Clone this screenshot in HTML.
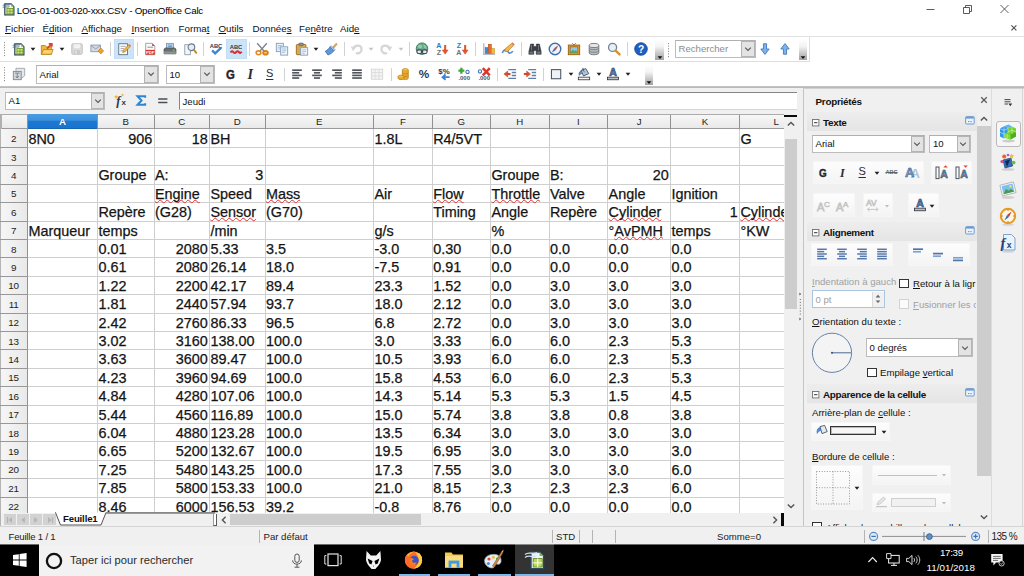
<!DOCTYPE html>
<html lang="fr"><head><meta charset="utf-8"><title>LOG-01-003-020-xxx.CSV - OpenOffice Calc</title>
<style>
html,body{margin:0;padding:0}
body{width:1024px;height:576px;overflow:hidden;position:relative;background:#f0f0f0;
 font-family:"Liberation Sans",sans-serif;font-size:9.6px;color:#000;line-height:1}
div,span,svg{position:absolute;box-sizing:border-box}
svg{overflow:visible}
.t{white-space:nowrap}
.u{text-decoration:underline}
.cell{font-size:14.4px;white-space:nowrap;color:#141414;line-height:18px;height:18px;-webkit-text-stroke:0.25px #141414}
.sp{text-decoration:underline wavy #e03030;text-decoration-thickness:1px;text-underline-offset:0px;text-decoration-skip-ink:none}
.hd{font-size:9.7px;color:#1c1c1c;text-align:center;line-height:14px;height:14px}
.rh{font-size:9.9px;color:#1c1c1c;letter-spacing:-0.3px;text-align:center;line-height:18px;height:18px;width:27px;left:0}
.vl{width:1px;background:#cfcfcf;top:0}
.hl{height:1px;background:#cfcfcf;left:0}
.combo{background:#fff;border:1px solid #bcbcbc;border-top-color:#b0b0b0}
.cbtn{background:#e3e3e3;border:1px solid #b4b4b4}
.sep{width:1px;background:#d2d2d2}
.grp{background:linear-gradient(#fdfdfd,#f4f4f4);border:1px solid #f6f6f6}
.ui{font-size:9.6px;white-space:nowrap;color:#111}
.b{font-weight:bold}
.dis{color:#a0a0a0}
</style></head>
<body>
<div class="" style="left:0px;top:0px;width:1024px;height:87px;background:#fff"></div><svg style="left:1.50px;top:2.20px" width="14" height="14" viewBox="0 0 16 16" ><path d="M3.2 2.2 L10.4 2.2 L13.6 5.4 V14.6 H3.2 Z" fill="#f1f5f8" stroke="#2b4558" stroke-width="1.4"/><path d="M10.4 2.2 L13.6 5.4 H10.4 Z" fill="#9cc24a"/><path d="M.8 4 C3.4 2 5.6 4.6 9 3 M.8 6.2 C3.4 4.4 5.4 6.6 8.4 5.4" stroke="#4f6b82" stroke-width="1" fill="none"/><rect x="5.6" y="7.4" width="7" height="6.2" fill="#d4e978" stroke="#6f9a2a" stroke-width="1"/><path d="M5.6 10.5 H12.6 M9.1 7.4 V13.6" stroke="#6f9a2a" stroke-width=".9"/></svg><span class="t ui" style="left:16.7px;top:5.6px;font-size:9.75px;color:#000;letter-spacing:-0.2px">LOG-01-003-020-xxx.CSV - OpenOffice Calc</span><svg style="left:920px;top:0" width="104" height="20" viewBox="0 0 104 20"><path d="M6.5 9.5 H14.5" stroke="#333" stroke-width=".8"/><path d="M43.5 7.5 H49.5 V13.5 H43.5 Z M45.5 7.5 V5.5 H51.5 V11.5 H49.5" fill="none" stroke="#333" stroke-width=".8"/><path d="M80.5 5 L88.5 13 M88.5 5 L80.5 13" stroke="#333" stroke-width=".8"/></svg><span class="t ui" style="left:5px;top:23.8px;font-size:9.75px"><span class="u" style="position:static">F</span>ichier</span><span class="t ui" style="left:42.5px;top:23.8px;font-size:9.75px">É<span class="u" style="position:static">d</span>ition</span><span class="t ui" style="left:81.5px;top:23.8px;font-size:9.75px"><span class="u" style="position:static">A</span>ffichage</span><span class="t ui" style="left:131.5px;top:23.8px;font-size:9.75px"><span class="u" style="position:static">I</span>nsertion</span><span class="t ui" style="left:178.5px;top:23.8px;font-size:9.75px">Forma<span class="u" style="position:static">t</span></span><span class="t ui" style="left:218.5px;top:23.8px;font-size:9.75px"><span class="u" style="position:static">O</span>utils</span><span class="t ui" style="left:252.5px;top:23.8px;font-size:9.75px">Donnée<span class="u" style="position:static">s</span></span><span class="t ui" style="left:299px;top:23.8px;font-size:9.75px">Fe<span class="u" style="position:static">n</span>être</span><span class="t ui" style="left:340px;top:23.8px;font-size:9.75px">Aid<span class="u" style="position:static">e</span></span><svg style="left:1009px;top:22.5px" width="10" height="10" viewBox="0 0 10 10"><path d="M2.4 2.4 L7.4 7.4 M7.4 2.4 L2.4 7.4" stroke="#555" stroke-width="1.2"/></svg><div class="" style="left:0px;top:36px;width:1024px;height:1px;background:#e2e2e2"></div><div class="" style="left:0px;top:61px;width:809px;height:1px;background:#dedede"></div><div class="" style="left:808.5px;top:37px;width:1px;height:25px;background:#dedede"></div><div class="" style="left:0px;top:86px;width:1024px;height:2px;background:linear-gradient(#c9c9c9,#b4b4b4)"></div><div class="" style="left:0px;top:88px;width:1024px;height:26px;background:#f0f0f0"></div><svg style="left:3.5px;top:42px" width="2" height="15" viewBox="0 0 2 15"><rect x="0" y="0.0" width="1" height="1.1" fill="#8a8a8a"/><rect x="0" y="2.6" width="1" height="1.1" fill="#8a8a8a"/><rect x="0" y="5.2" width="1" height="1.1" fill="#8a8a8a"/><rect x="0" y="7.8" width="1" height="1.1" fill="#8a8a8a"/><rect x="0" y="10.4" width="1" height="1.1" fill="#8a8a8a"/><rect x="0" y="13.0" width="1" height="1.1" fill="#8a8a8a"/></svg><svg style="left:11.60px;top:41.80px" width="14" height="14" viewBox="0 0 16 16" ><path d="M3.2 2.2 L10.4 2.2 L13.6 5.4 V14.6 H3.2 Z" fill="#f1f5f8" stroke="#2b4558" stroke-width="1.4"/><path d="M10.4 2.2 L13.6 5.4 H10.4 Z" fill="#9cc24a"/><path d="M.8 4 C3.4 2 5.6 4.6 9 3 M.8 6.2 C3.4 4.4 5.4 6.6 8.4 5.4" stroke="#4f6b82" stroke-width="1" fill="none"/><rect x="5.6" y="7.4" width="7" height="6.2" fill="#d4e978" stroke="#6f9a2a" stroke-width="1"/><path d="M5.6 10.5 H12.6 M9.1 7.4 V13.6" stroke="#6f9a2a" stroke-width=".9"/></svg><svg style="left:29px;top:45.099999999999994px" width="8" height="8" viewBox="-4 -4 8 8"><path d="M-2.4 -1.2 L2.4 -1.2 L0 1.7999999999999998 Z" fill="#222"/></svg><svg style="left:40.30px;top:41.80px" width="14" height="14" viewBox="0 0 16 16" ><path d="M1.5 4 H6 L7.3 5.6 H13 V14 H1.5 Z" fill="#f3b73e" stroke="#b57a14" stroke-width=".9"/><path d="M1.5 14 L4 8.6 H15 L13 14 Z" fill="#fbd36a" stroke="#b57a14" stroke-width=".9"/><path d="M8 7.5 L13.2 2.3 M13.5 5.5 V2 H10" stroke="#d8432a" stroke-width="2" fill="none"/></svg><svg style="left:58px;top:45.099999999999994px" width="8" height="8" viewBox="-4 -4 8 8"><path d="M-2.4 -1.2 L2.4 -1.2 L0 1.7999999999999998 Z" fill="#222"/></svg><svg style="left:69.50px;top:41.80px" width="14" height="14" viewBox="0 0 16 16" ><rect x="2" y="2" width="12" height="12" rx="1.5" fill="#dcdcdc" stroke="#bdbdbd"/><rect x="4.5" y="2.5" width="7" height="4.5" fill="#f2f2f2"/><rect x="4.5" y="9.5" width="7" height="4.5" fill="#c9c9c9"/><rect x="6" y="10.5" width="1.6" height="2.6" fill="#eee"/></svg><svg style="left:89.50px;top:41.80px" width="14" height="14" viewBox="0 0 16 16" ><rect x="1" y="3.5" width="11" height="7.6" fill="#d5dbe2" stroke="#8c97a5"/><path d="M1.3 4 L6.5 8 L11.7 4" fill="none" stroke="#8c97a5"/><path d="M9.2 10.2 L12.4 6.8 L15.6 10.2 L12.4 13.6 Z" fill="#f0a02c" stroke="#c27612" stroke-width=".7"/></svg><div class="sep" style="left:110px;top:42px;width:1px;height:13.5px;"></div><div class="" style="left:113.5px;top:38.5px;width:20px;height:20.5px;background:#cce4f7;border:1px solid #c2def5"></div><svg style="left:117.00px;top:41.80px" width="14" height="14" viewBox="0 0 16 16" ><rect x="2" y="2" width="10" height="12.5" fill="#fbfbfb" stroke="#5f6b7a"/><path d="M4 5 H10 M4 7.5 H8 M4 10 H7" stroke="#9aa6b4"/><path d="M6.5 12 L7.3 9.3 L13.3 3.2 L15.2 5.1 L9.2 11.2 Z" fill="#f3b64a" stroke="#a86f16" stroke-width=".7"/><path d="M13.3 3.2 L15.2 5.1 L15.9 4.3 L14.1 2.4 Z" fill="#e8607c"/></svg><div class="sep" style="left:136.5px;top:42px;width:1px;height:13.5px;"></div><svg style="left:143.00px;top:41.80px" width="14" height="14" viewBox="0 0 16 16" ><path d="M3 1.5 H10.5 L13.5 4.5 V14.5 H3 Z" fill="#fafafa" stroke="#9b9b9b"/><path d="M10.5 1.5 L13.5 4.5 H10.5 Z" fill="#d8402f"/><path d="M5 6 H11.5" stroke="#9fb4cc" stroke-width="1.6"/><rect x="3" y="9" width="10.5" height="5.5" fill="#d5342a"/><text x="8.2" y="13.6" font-family="Liberation Sans,sans-serif" font-size="4.8" font-weight="bold" text-anchor="middle" fill="#fff">PDF</text></svg><svg style="left:162.50px;top:41.80px" width="14" height="14" viewBox="0 0 16 16" ><rect x="4" y="1.5" width="8" height="6" fill="#c8daf0" stroke="#6b87a8" stroke-width=".8"/><path d="M5.5 3.5 H10.5 M5.5 5.2 H10.5" stroke="#5b84b8" stroke-width=".9"/><path d="M1.2 8 L3 6.8 H13 L14.8 8 V13.5 H1.2 Z" fill="#6a6e70" stroke="#3e4244" stroke-width=".8"/><rect x="1.2" y="10.8" width="13.6" height="2.7" fill="#8d9294"/><rect x="11.3" y="8.8" width="2" height="1" fill="#9fdc5a"/></svg><svg style="left:182.50px;top:41.80px" width="14" height="14" viewBox="0 0 16 16" ><path d="M2 3 H8.5 V14.5 H2 Z" fill="#f4f6f8" stroke="#8d98a6"/><circle cx="9.6" cy="6" r="3.8" fill="#dfeefa" stroke="#6e7a88" stroke-width="1.3"/><path d="M12.2 8.8 L15.2 12.4" stroke="#c58a2a" stroke-width="2.2" stroke-linecap="round"/></svg><div class="sep" style="left:202.5px;top:42px;width:1px;height:13.5px;"></div><svg style="left:208.50px;top:41.80px" width="14" height="14" viewBox="0 0 16 16" ><text x="8" y="6.6" font-family="Liberation Sans,sans-serif" font-size="6.6" font-weight="bold" text-anchor="middle" fill="#2b3a4e">ABC</text><path d="M3.6 9.6 L7 13 L14 6.4" fill="none" stroke="#3e84d6" stroke-width="2.6"/></svg><div class="" style="left:226px;top:38.5px;width:20.5px;height:20.5px;background:#cce4f7;border:1px solid #c2def5"></div><svg style="left:229.20px;top:41.80px" width="14" height="14" viewBox="0 0 16 16" ><text x="8" y="7.6" font-family="Liberation Sans,sans-serif" font-size="6.6" font-weight="bold" text-anchor="middle" fill="#2b3a4e">ABC</text><path d="M1.8 12 Q3.4 9.4 5 11.6 T8.2 11.6 T11.4 11.6 T14.4 11" fill="none" stroke="#d92f2f" stroke-width="2.3"/></svg><div class="sep" style="left:249px;top:42px;width:1px;height:13.5px;"></div><svg style="left:255.00px;top:41.80px" width="14" height="14" viewBox="0 0 16 16" ><path d="M2.5 1.5 L10.5 10.5 M13.5 1.5 L5.5 10.5" stroke="#7b8794" stroke-width="1.6"/><ellipse cx="4" cy="12.3" rx="2.7" ry="2.2" fill="none" stroke="#e28a1f" stroke-width="1.8"/><ellipse cx="12" cy="12.3" rx="2.7" ry="2.2" fill="#f4c27a" stroke="#d97e16" stroke-width="2"/></svg><svg style="left:275.00px;top:41.80px" width="14" height="14" viewBox="0 0 16 16" ><rect x="1.5" y="1.5" width="8" height="9.5" fill="#eaf1f8" stroke="#7f9cc0"/><path d="M3.2 4 H7.8 M3.2 6 H7.8 M3.2 8 H6" stroke="#8eb0d6" stroke-width=".8"/><rect x="6.5" y="5.5" width="8" height="9.5" fill="#eaf1f8" stroke="#7f9cc0"/><path d="M8.2 8 H12.8 M8.2 10 H12.8 M8.2 12 H11" stroke="#8eb0d6" stroke-width=".8"/></svg><svg style="left:294.50px;top:41.80px" width="14" height="14" viewBox="0 0 16 16" ><rect x="1.5" y="2.8" width="11" height="11.7" rx="1" fill="#d9a94f" stroke="#94681c"/><rect x="4.5" y="1.2" width="5" height="3" rx=".8" fill="#8b8f94" stroke="#5c6064" stroke-width=".7"/><rect x="6.5" y="6.5" width="8" height="8.5" fill="#f2f6fa" stroke="#7f9cc0"/><path d="M8.2 9 H12.8 M8.2 11 H12.8 M8.2 13 H11" stroke="#8eb0d6" stroke-width=".8"/></svg><svg style="left:312px;top:45.099999999999994px" width="8" height="8" viewBox="-4 -4 8 8"><path d="M-2.4 -1.2 L2.4 -1.2 L0 1.7999999999999998 Z" fill="#222"/></svg><svg style="left:324.00px;top:41.80px" width="14" height="14" viewBox="0 0 16 16" ><path d="M9.4 6.6 L13.8 1.4 L15 2.6 L10.6 7.8 Z" fill="#e9b75b" stroke="#9c6d1a" stroke-width=".6"/><path d="M1.5 10.5 C4 9.5 5.5 7.5 7 5.5 L11.5 10 C9.5 12 7.5 14 4.5 14.8 C3.5 13 2.2 12 1.5 10.5 Z" fill="#5d97dc" stroke="#2d5f9e" stroke-width=".8"/><path d="M7 5.5 L8.2 4.3 L12.6 8.7 L11.5 10 Z" fill="#c7d9ee" stroke="#2d5f9e" stroke-width=".6"/></svg><div class="sep" style="left:344px;top:42px;width:1px;height:13.5px;"></div><svg style="left:349.50px;top:41.80px" width="14" height="14" viewBox="0 0 16 16" ><g><path d="M4.2 7.2 C6 2.8 13.5 3.2 13.2 8.8 C13 12.4 9.4 13.6 6.6 12.6" fill="none" stroke="#d6d6d6" stroke-width="2.6"/><path d="M1 5 L7.2 5.6 L3.4 10.6 Z" fill="#d6d6d6"/></g></svg><svg style="left:367px;top:45.099999999999994px" width="8" height="8" viewBox="-4 -4 8 8"><path d="M-2.4 -1.2 L2.4 -1.2 L0 1.7999999999999998 Z" fill="#c4c4c4"/></svg><svg style="left:379.00px;top:41.80px" width="14" height="14" viewBox="0 0 16 16" ><g transform="translate(16 0) scale(-1 1)"><path d="M4.2 7.2 C6 2.8 13.5 3.2 13.2 8.8 C13 12.4 9.4 13.6 6.6 12.6" fill="none" stroke="#d6d6d6" stroke-width="2.6"/><path d="M1 5 L7.2 5.6 L3.4 10.6 Z" fill="#d6d6d6"/></g></svg><svg style="left:396.5px;top:45.099999999999994px" width="8" height="8" viewBox="-4 -4 8 8"><path d="M-2.4 -1.2 L2.4 -1.2 L0 1.7999999999999998 Z" fill="#c4c4c4"/></svg><div class="sep" style="left:408.5px;top:42px;width:1px;height:13.5px;"></div><svg style="left:414.50px;top:41.80px" width="14" height="14" viewBox="0 0 16 16" ><circle cx="8" cy="7.6" r="6.6" fill="#6aa88c" stroke="#3b6f58"/><path d="M3 5 C5 2 9 3 8 6 C7.4 8 4 7.6 3 5 Z M9.6 3 C12 3.4 13.6 5.6 13 8 C11 7 9.6 5.4 9.6 3 Z" fill="#8fd0a8"/><rect x="2.2" y="9" width="5.6" height="4.2" rx="2" fill="#e9edf0" stroke="#3f4a54" stroke-width="1.2"/><rect x="8.2" y="9" width="5.6" height="4.2" rx="2" fill="#e9edf0" stroke="#3f4a54" stroke-width="1.2"/><path d="M6.6 11.1 H9.4" stroke="#3f4a54" stroke-width="1.3"/></svg><svg style="left:434.50px;top:41.80px" width="14" height="14" viewBox="0 0 16 16" ><text x="4.4" y="7.2" font-family="Liberation Sans,sans-serif" font-size="8.2" font-weight="bold" text-anchor="middle" fill="#2d78cc">A</text><text x="4.4" y="14.8" font-family="Liberation Sans,sans-serif" font-size="8.2" font-weight="bold" text-anchor="middle" fill="#6a7480">Z</text><path d="M11.6 3.4 V10" stroke="#e2582e" stroke-width="2.4"/><path d="M8.2 9 H15 L11.6 14 Z" fill="#e2582e" stroke="#b8401c" stroke-width=".4"/></svg><svg style="left:454.50px;top:41.80px" width="14" height="14" viewBox="0 0 16 16" ><text x="4.4" y="7.2" font-family="Liberation Sans,sans-serif" font-size="8.2" font-weight="bold" text-anchor="middle" fill="#2d78cc">Z</text><text x="4.4" y="14.8" font-family="Liberation Sans,sans-serif" font-size="8.2" font-weight="bold" text-anchor="middle" fill="#6a7480">A</text><path d="M11.6 3.4 V10" stroke="#e2582e" stroke-width="2.4"/><path d="M8.2 9 H15 L11.6 14 Z" fill="#e2582e" stroke="#b8401c" stroke-width=".4"/></svg><div class="sep" style="left:474.5px;top:42px;width:1px;height:13.5px;"></div><svg style="left:481.50px;top:41.80px" width="14" height="14" viewBox="0 0 16 16" ><path d="M2 1.5 V14 H15" fill="none" stroke="#b4bcc6" stroke-width="1.6"/><rect x="3.6" y="6.5" width="3.4" height="6.5" fill="#3f8fd0" stroke="#2a64a0" stroke-width=".6"/><rect x="7.2" y="2.6" width="3.4" height="10.4" fill="#ec6a2c" stroke="#b04410" stroke-width=".6"/><rect x="10.8" y="7.6" width="3.4" height="5.4" fill="#f4bc3a" stroke="#b88410" stroke-width=".6"/></svg><svg style="left:501.00px;top:41.80px" width="14" height="14" viewBox="0 0 16 16" ><path d="M1.5 12.5 C3 8 7 8 8 11 C9 13.6 12 13 13.5 10.5" fill="none" stroke="#4f8fd8" stroke-width="1.8"/><path d="M4 10.6 L5 7.6 L12.2 1.4 L14.6 3.8 L7.4 11 Z" fill="#f3b64a" stroke="#a86f16" stroke-width=".7"/><path d="M12.2 1.4 L14.6 3.8 L15.6 2.8 L13.2 .4 Z" fill="#e8607c"/></svg><div class="sep" style="left:521px;top:42px;width:1px;height:13.5px;"></div><svg style="left:528.00px;top:41.80px" width="14" height="14" viewBox="0 0 16 16" ><path d="M3 2.4 H6.4 V5 H9.6 V2.4 H13 L15 11 V14 H9.4 V9.6 H6.6 V14 H1 V11 Z" fill="#3a3f45" stroke="#1f2328" stroke-width=".6"/><rect x="1.6" y="11" width="4.4" height="2.4" fill="#6d747c"/><rect x="10" y="11" width="4.4" height="2.4" fill="#6d747c"/><path d="M4 3.2 V9.6 M12 3.2 V9.6" stroke="#7d858e" stroke-width=".9"/></svg><svg style="left:547.50px;top:41.80px" width="14" height="14" viewBox="0 0 16 16" ><circle cx="8" cy="8" r="6.6" fill="#eef3f9" stroke="#3f6fb4" stroke-width="1.6"/><path d="M11.8 3.8 L9 9 L7 7 Z" fill="#d8392c"/><path d="M4.2 12.2 L7 7 L9 9 Z" fill="#3f6fb4"/></svg><svg style="left:567.00px;top:41.80px" width="14" height="14" viewBox="0 0 16 16" ><path d="M6 1.4 L8 3.4 L10 1.4" fill="none" stroke="#6b5a3a" stroke-width=".9"/><rect x="1.5" y="3.5" width="13" height="11" fill="#e89a2c" stroke="#9a5c0c"/><rect x="3.6" y="5.6" width="8.8" height="6.8" fill="#8fc7ea" stroke="#7c4a08" stroke-width=".6"/><path d="M3.8 12.2 L6.6 8.6 L8.6 10.6 L10.2 9.2 L12.2 12.2 Z" fill="#5aa84a"/></svg><svg style="left:586.50px;top:41.80px" width="14" height="14" viewBox="0 0 16 16" ><path d="M2.5 4 V12.5 C2.5 15.2 13.5 15.2 13.5 12.5 V4" fill="#b9bdc2" stroke="#6c7278"/><ellipse cx="8" cy="4" rx="5.5" ry="2.4" fill="#e4e6e9" stroke="#6c7278"/><path d="M2.5 6.9 C2.5 9.5 13.5 9.5 13.5 6.9 M2.5 9.8 C2.5 12.4 13.5 12.4 13.5 9.8" fill="none" stroke="#6c7278" stroke-width=".9"/></svg><svg style="left:606.50px;top:41.80px" width="14" height="14" viewBox="0 0 16 16" ><circle cx="6.4" cy="6.2" r="4.6" fill="#e3f0fb" stroke="#76828f" stroke-width="1.5"/><path d="M9.8 9.8 L14.4 14.2" stroke="#d8912a" stroke-width="2.6" stroke-linecap="round"/></svg><div class="sep" style="left:626.5px;top:42px;width:1px;height:13.5px;"></div><svg style="left:633.50px;top:41.80px" width="14" height="14" viewBox="0 0 16 16" ><circle cx="8" cy="8" r="7.2" fill="#1f5fc4" stroke="#123f8c" stroke-width=".9"/><text x="8" y="12.2" font-family="Liberation Sans,sans-serif" font-size="11.5" font-weight="bold" text-anchor="middle" fill="#fff">?</text></svg><div style="left:655px;top:39px;width:8.5px;height:20.5px;background:linear-gradient(#ffffff 0%,#f4f4f4 35%,#b9b9b9 80%,#a2a2a2 100%)"></div><svg style="left:655.7px;top:51.5px" width="8" height="8" viewBox="-4 -4 8 8"><path d="M-2.4 .2 L2.4 .2 L0 2.9 Z" fill="#111"/></svg><svg style="left:668px;top:42.5px" width="2" height="15" viewBox="0 0 2 15"><rect x="0" y="0.0" width="1" height="1.1" fill="#8a8a8a"/><rect x="0" y="2.6" width="1" height="1.1" fill="#8a8a8a"/><rect x="0" y="5.2" width="1" height="1.1" fill="#8a8a8a"/><rect x="0" y="7.8" width="1" height="1.1" fill="#8a8a8a"/><rect x="0" y="10.4" width="1" height="1.1" fill="#8a8a8a"/><rect x="0" y="13.0" width="1" height="1.1" fill="#8a8a8a"/></svg><div class="combo" style="left:675px;top:39.5px;width:80.5px;height:18.5px;"></div><span class="t ui" style="left:678.5px;top:44.2px;color:#8c8c8c;font-size:9.6px">Rechercher</span><div class="cbtn" style="left:740.5px;top:40.5px;width:14px;height:16.5px;"></div><svg style="left:741.5px;top:42.8px" width="12" height="12" viewBox="-6 -6 12 12"><path d="M-2.8 -1.4 L0 1.4 L2.8 -1.4" fill="none" stroke="#555" stroke-width="1.1"/></svg><svg style="left:757.50px;top:41.80px" width="14" height="14" viewBox="0 0 16 16" ><g><path d="M6.2 2 H9.8 V8 H12.8 L8 14.2 L3.2 8 H6.2 Z" fill="#7fb2ea" stroke="#3f78c0" stroke-width="1"/></g></svg><svg style="left:777.50px;top:41.80px" width="14" height="14" viewBox="0 0 16 16" ><g transform="translate(0 16) scale(1 -1)"><path d="M6.2 2 H9.8 V8 H12.8 L8 14.2 L3.2 8 H6.2 Z" fill="#7fb2ea" stroke="#3f78c0" stroke-width="1"/></g></svg><div style="left:798.5px;top:39px;width:8.5px;height:20.5px;background:linear-gradient(#ffffff 0%,#f4f4f4 35%,#b9b9b9 80%,#a2a2a2 100%)"></div><svg style="left:799.2px;top:51.5px" width="8" height="8" viewBox="-4 -4 8 8"><path d="M-2.4 .2 L2.4 .2 L0 2.9 Z" fill="#111"/></svg><svg style="left:3.5px;top:67px" width="2" height="15" viewBox="0 0 2 15"><rect x="0" y="0.0" width="1" height="1.1" fill="#8a8a8a"/><rect x="0" y="2.6" width="1" height="1.1" fill="#8a8a8a"/><rect x="0" y="5.2" width="1" height="1.1" fill="#8a8a8a"/><rect x="0" y="7.8" width="1" height="1.1" fill="#8a8a8a"/><rect x="0" y="10.4" width="1" height="1.1" fill="#8a8a8a"/><rect x="0" y="13.0" width="1" height="1.1" fill="#8a8a8a"/></svg><svg style="left:11.50px;top:67.00px" width="14" height="14" viewBox="0 0 16 16" ><path d="M4.5 1.5 H14.5 V10 L11.5 12.5 H4.5 Z" fill="#e6e9ec" stroke="#9ba3ab"/><rect x="1.5" y="5" width="9" height="9.5" fill="#d2d7dc" stroke="#7c858e"/><path d="M3.5 7 H8.5 M6 7 V12.6 M4.2 10.4 L6 12.6 L7.8 10.4" fill="none" stroke="#6b737b" stroke-width=".9"/></svg><div class="combo" style="left:36px;top:65px;width:122.5px;height:18.5px;"></div><span class="t ui" style="left:39.5px;top:69.6px;font-size:9.6px">Arial</span><div class="cbtn" style="left:144px;top:66px;width:13.5px;height:16.5px;"></div><svg style="left:144.7px;top:68.2px" width="12" height="12" viewBox="-6 -6 12 12"><path d="M-2.8 -1.4 L0 1.4 L2.8 -1.4" fill="none" stroke="#555" stroke-width="1.1"/></svg><div class="combo" style="left:166px;top:65px;width:48.5px;height:18.5px;"></div><span class="t ui" style="left:169.5px;top:69.6px;font-size:9.6px">10</span><div class="cbtn" style="left:200px;top:66px;width:13.5px;height:16.5px;"></div><svg style="left:200.7px;top:68.2px" width="12" height="12" viewBox="-6 -6 12 12"><path d="M-2.8 -1.4 L0 1.4 L2.8 -1.4" fill="none" stroke="#555" stroke-width="1.1"/></svg><span class="t ui b" style="left:226.4px;top:68.3px;font-size:13.2px;color:#23262b;transform:scaleX(.86);transform-origin:0 0;-webkit-text-stroke:.45px #23262b">G</span><span class="t ui b" style="left:247.6px;top:67.2px;font-size:14.2px;font-style:italic;font-family:'Liberation Serif',serif;color:#2a2d33">I</span><span class="t ui u" style="left:266px;top:67.8px;font-size:11px;color:#2a2d33;text-underline-offset:1.5px">S</span><div class="sep" style="left:284px;top:67.5px;width:1px;height:13.5px;"></div><svg style="left:290.00px;top:67.20px" width="14" height="14" viewBox="0 0 16 16" ><path d="M2.5 3.6 H13.5" stroke="#50555b" stroke-width="1.9"/><path d="M2.5 6.6 H10.5" stroke="#50555b" stroke-width="1.9"/><path d="M2.5 9.6 H13.5" stroke="#50555b" stroke-width="1.9"/><path d="M2.5 12.6 H10.5" stroke="#50555b" stroke-width="1.9"/></svg><svg style="left:310.00px;top:67.20px" width="14" height="14" viewBox="0 0 16 16" ><path d="M2.5 3.6 H13.5" stroke="#50555b" stroke-width="1.9"/><path d="M4.5 6.6 H11.5" stroke="#50555b" stroke-width="1.9"/><path d="M2.5 9.6 H13.5" stroke="#50555b" stroke-width="1.9"/><path d="M4.5 12.6 H11.5" stroke="#50555b" stroke-width="1.9"/></svg><svg style="left:330.00px;top:67.20px" width="14" height="14" viewBox="0 0 16 16" ><path d="M2.5 3.6 H13.5" stroke="#50555b" stroke-width="1.9"/><path d="M5.5 6.6 H13.5" stroke="#50555b" stroke-width="1.9"/><path d="M2.5 9.6 H13.5" stroke="#50555b" stroke-width="1.9"/><path d="M5.5 12.6 H13.5" stroke="#50555b" stroke-width="1.9"/></svg><svg style="left:350.00px;top:67.20px" width="14" height="14" viewBox="0 0 16 16" ><path d="M2.5 3.6 H13.5" stroke="#50555b" stroke-width="1.9"/><path d="M2.5 6.6 H13.5" stroke="#50555b" stroke-width="1.9"/><path d="M2.5 9.6 H13.5" stroke="#50555b" stroke-width="1.9"/><path d="M2.5 12.6 H13.5" stroke="#50555b" stroke-width="1.9"/></svg><svg style="left:370.00px;top:67.20px" width="14" height="14" viewBox="0 0 16 16" ><rect x="1.5" y="2.5" width="13" height="11.5" fill="#f4f4f4" stroke="#d4d4d4"/><path d="M1.5 6.3 H14.5 M1.5 10.2 H14.5 M5.8 2.5 V14 M10.2 2.5 V14" stroke="#d9d9d9" stroke-width=".9"/></svg><div class="sep" style="left:390.5px;top:67.5px;width:1px;height:13.5px;"></div><svg style="left:396.50px;top:67.00px" width="14" height="14" viewBox="0 0 16 16" ><ellipse cx="9.5" cy="3.6" rx="3.4" ry="1.8" fill="#f6c84a" stroke="#b07a12" stroke-width=".8"/><path d="M6.1 3.6 V12.6 C6.1 15 12.9 15 12.9 12.6 V3.6" fill="#eaa82c" stroke="#b07a12" stroke-width=".8"/><path d="M6.1 6.4 C6.1 8.6 12.9 8.6 12.9 6.4 M6.1 9.4 C6.1 11.6 12.9 11.6 12.9 9.4" fill="none" stroke="#b07a12" stroke-width=".7"/><ellipse cx="4.6" cy="11" rx="3.4" ry="1.7" fill="#f6c84a" stroke="#b07a12" stroke-width=".8"/><path d="M1.2 11 V12.8 C1.2 15 8 15 8 12.8 V11" fill="#eaa82c" stroke="#b07a12" stroke-width=".8"/></svg><svg style="left:416.50px;top:67.00px" width="14" height="14" viewBox="0 0 16 16" ><text x="8" y="13" font-family="Liberation Sans,sans-serif" font-size="13.5" font-weight="bold" text-anchor="middle" fill="#2f3a48">%</text></svg><svg style="left:436.50px;top:67.00px" width="14" height="14" viewBox="0 0 16 16" ><text x="8" y="8" font-family="Liberation Sans,sans-serif" font-size="9" font-weight="bold" text-anchor="middle" fill="#2f3a48">$%</text><path d="M14.4 11.6 H7.4 M9.8 8.6 L6.4 11.6 L9.8 14.6" fill="none" stroke="#3e84d6" stroke-width="2.2"/></svg><svg style="left:456.50px;top:67.00px" width="14" height="14" viewBox="0 0 16 16" ><path d="M1.6 4.2 H8.4 M5 .8 V7.6" stroke="#3fa53a" stroke-width="2.6"/><circle cx="12" cy="5.6" r="1.9" fill="none" stroke="#3f6fb4" stroke-width="1.2"/><text x="8.2" y="15" font-family="Liberation Sans,sans-serif" font-size="6.8" font-weight="bold" text-anchor="middle" fill="#44546a">.000</text></svg><svg style="left:476.50px;top:67.00px" width="14" height="14" viewBox="0 0 16 16" ><text x="8.2" y="15" font-family="Liberation Sans,sans-serif" font-size="6.8" font-weight="bold" text-anchor="middle" fill="#44546a">.000</text><circle cx="3.4" cy="5" r="1.9" fill="none" stroke="#3f6fb4" stroke-width="1.2"/><path d="M6.6 1.2 L14.6 9.6 M14.6 1.2 L6.6 9.6" stroke="#d8392c" stroke-width="2.8"/></svg><div class="sep" style="left:497px;top:67.5px;width:1px;height:13.5px;"></div><svg style="left:503.00px;top:67.00px" width="14" height="14" viewBox="0 0 16 16" ><path d="M6 3 H15 M10 6.3 H15 M10 9.7 H15 M6 13 H15" stroke="#5f7fa8" stroke-width="1.5"/><path d="M4.6 8 H8.6" stroke="#d8452c" stroke-width="2.4"/><path d="M5.4 4.6 L1 8 L5.4 11.4 Z" fill="#e0502c" stroke="#b83a1c" stroke-width=".5"/></svg><svg style="left:523.00px;top:67.00px" width="14" height="14" viewBox="0 0 16 16" ><path d="M6 3 H15 M10 6.3 H15 M10 9.7 H15 M6 13 H15" stroke="#5f7fa8" stroke-width="1.5"/><path d="M1 8 H5" stroke="#d8452c" stroke-width="2.4"/><path d="M4.2 4.6 L8.6 8 L4.2 11.4 Z" fill="#e0502c" stroke="#b83a1c" stroke-width=".5"/></svg><div class="sep" style="left:543px;top:67.5px;width:1px;height:13.5px;"></div><svg style="left:549.00px;top:67.00px" width="14" height="14" viewBox="0 0 16 16" ><rect x="2.8" y="3" width="10.6" height="10.4" fill="#eef1f5" stroke="#4a5462" stroke-width="1.2"/></svg><svg style="left:566.5px;top:70.3px" width="8" height="8" viewBox="-4 -4 8 8"><path d="M-2.4 -1.2 L2.4 -1.2 L0 1.7999999999999998 Z" fill="#222"/></svg><svg style="left:577.00px;top:67.00px" width="14" height="14" viewBox="0 0 16 16" ><path d="M4.6 4 L10 1.8 L13.4 7.6 L7.4 10.2 Z" fill="#b4c6dc" stroke="#3f4c5e" stroke-width="1"/><path d="M4.6 4.6 C2.6 5.4 2 7 2.6 9.6 C3.6 8.2 4.6 7.6 5.8 7.4" fill="#5b8ed0" stroke="#2d5690" stroke-width=".7"/><path d="M7 1 C6.2 2.8 7 4.6 8.6 5.6" fill="none" stroke="#3f4c5e" stroke-width="1.1"/><rect x="1.5" y="11.6" width="13" height="3" fill="#f4f4f4" stroke="#2d3137" stroke-width=".9"/></svg><svg style="left:594.5px;top:70.3px" width="8" height="8" viewBox="-4 -4 8 8"><path d="M-2.4 -1.2 L2.4 -1.2 L0 1.7999999999999998 Z" fill="#222"/></svg><svg style="left:606.00px;top:67.00px" width="14" height="14" viewBox="0 0 16 16" ><text x="8" y="10.6" font-family="Liberation Sans,sans-serif" font-size="12" font-weight="bold" text-anchor="middle" fill="#5585c4" stroke="#26364e" stroke-width=".7">A</text><rect x="1.6" y="11.6" width="12.8" height="3" fill="#b9bcc0" stroke="#2d3137" stroke-width=".9"/></svg><svg style="left:623.5px;top:70.3px" width="8" height="8" viewBox="-4 -4 8 8"><path d="M-2.4 -1.2 L2.4 -1.2 L0 1.7999999999999998 Z" fill="#222"/></svg><div style="left:644.5px;top:64.5px;width:8.5px;height:20.5px;background:linear-gradient(#ffffff 0%,#f4f4f4 35%,#b9b9b9 80%,#a2a2a2 100%)"></div><svg style="left:645.2px;top:77.0px" width="8" height="8" viewBox="-4 -4 8 8"><path d="M-2.4 .2 L2.4 .2 L0 2.9 Z" fill="#111"/></svg><div class="combo" style="left:5px;top:92px;width:100px;height:17.6px;"></div><span class="t ui" style="left:8.5px;top:96px;font-size:9.6px">A1</span><div class="cbtn" style="left:91px;top:93px;width:13px;height:15.6px;"></div><svg style="left:91.5px;top:94.8px" width="12" height="12" viewBox="-6 -6 12 12"><path d="M-2.8 -1.4 L0 1.4 L2.8 -1.4" fill="none" stroke="#555" stroke-width="1.1"/></svg><svg style="left:114px;top:92.2px" width="16" height="16" viewBox="0 0 16 16"><path d="M2.2 2.6 l.7 1.4 1.5.2 -1.1 1 .3 1.5 -1.4 -.7 -1.4.7 .3 -1.5 -1.1 -1 1.5 -.2z" fill="#f3b73e"/><path d="M8.6 1.2 l.5 1 1.1.1 -.8.8 .2 1.1 -1 -.5 -1 .5 .2 -1.1 -.8 -.8 1.1 -.1z" fill="#f3b73e"/><text x="2.2" y="13.2" font-family="Liberation Serif,serif" font-style="italic" font-weight="bold" font-size="12.5" fill="#2f3a48">f</text><text x="7.6" y="13.4" font-family="Liberation Sans,sans-serif" font-weight="bold" font-size="8" fill="#2f3a48">x</text></svg><svg style="left:135.8px;top:94.8px" width="11" height="11" viewBox="0 0 14 14"><path d="M11.6 3.6 V1.6 H2 L7 7 L2 12.4 H11.6 V10.4" fill="none" stroke="#2f86d0" stroke-width="2.6"/></svg><svg style="left:156.5px;top:95.6px" width="12" height="10" viewBox="0 0 12 10"><path d="M1.2 3 H10.4 M1.2 6.6 H10.4" stroke="#4a4f55" stroke-width="1.5"/></svg><div class="" style="left:178.5px;top:91.5px;width:619.5px;height:18.4px;background:#fff;border:1px solid #858585;border-right:1.5px solid #d6d6d6;border-bottom:1.5px solid #d6d6d6"></div><span class="t ui" style="left:182.5px;top:96.5px;font-size:9.6px">Jeudi</span><div class="" style="left:0px;top:114px;width:784px;height:399px;background:#fff;overflow:hidden"><div class="" style="left:0px;top:0px;width:784px;height:14.5px;background:linear-gradient(#f7f7f7,#e9e9e9);border-top:1.5px solid #ababab;border-bottom:1px solid #9a9a9a"></div>
<div class="" style="left:27.5px;top:0px;width:70px;height:14.5px;background:linear-gradient(#4a9be0 0%,#3d92dc 45%,#1c78d2 50%,#1874cd 100%);border-bottom:1px solid #1565b5"></div>
<span class="hd" style="left:27.5px;top:0.5px;width:70.0px;color:#fff;font-weight:bold;">A</span>
<div class="" style="left:97.0px;top:1px;width:1px;height:13.5px;background:#919191"></div>
<span class="hd" style="left:97.5px;top:0.5px;width:56.5px;color:#222;">B</span>
<div class="" style="left:153.5px;top:1px;width:1px;height:13.5px;background:#919191"></div>
<span class="hd" style="left:154px;top:0.5px;width:55.5px;color:#222;">C</span>
<div class="" style="left:209.0px;top:1px;width:1px;height:13.5px;background:#919191"></div>
<span class="hd" style="left:209.5px;top:0.5px;width:55.5px;color:#222;">D</span>
<div class="" style="left:264.5px;top:1px;width:1px;height:13.5px;background:#919191"></div>
<span class="hd" style="left:265px;top:0.5px;width:108.5px;color:#222;">E</span>
<div class="" style="left:373.0px;top:1px;width:1px;height:13.5px;background:#919191"></div>
<span class="hd" style="left:373.5px;top:0.5px;width:58.80000000000001px;color:#222;">F</span>
<div class="" style="left:431.8px;top:1px;width:1px;height:13.5px;background:#919191"></div>
<span class="hd" style="left:432.3px;top:0.5px;width:58.19999999999999px;color:#222;">G</span>
<div class="" style="left:490.0px;top:1px;width:1px;height:13.5px;background:#919191"></div>
<span class="hd" style="left:490.5px;top:0.5px;width:58.5px;color:#222;">H</span>
<div class="" style="left:548.5px;top:1px;width:1px;height:13.5px;background:#919191"></div>
<span class="hd" style="left:549px;top:0.5px;width:58.700000000000045px;color:#222;">I</span>
<div class="" style="left:607.2px;top:1px;width:1px;height:13.5px;background:#919191"></div>
<span class="hd" style="left:607.7px;top:0.5px;width:62.799999999999955px;color:#222;">J</span>
<div class="" style="left:670.0px;top:1px;width:1px;height:13.5px;background:#919191"></div>
<span class="hd" style="left:670.5px;top:0.5px;width:69.0px;color:#222;">K</span>
<div class="" style="left:739.0px;top:1px;width:1px;height:13.5px;background:#919191"></div>
<span class="hd" style="left:739.5px;top:0.5px;width:73.5px;color:#222;">L</span>
<div class="" style="left:812.5px;top:1px;width:1px;height:13.5px;background:#919191"></div>
<div class="" style="left:27px;top:1px;width:1px;height:13.5px;background:#919191"></div>
<div class="" style="left:0px;top:0px;width:1.5px;height:14.5px;background:#b0b0b0"></div>
<div class="" style="left:0px;top:14.5px;width:27.5px;height:399px;background:linear-gradient(90deg,#f6f6f6,#e9e9e9);border-right:1px solid #919191;border-left:1.5px solid #b4b4b4"></div>
<div class="vl" style="left:97.0px;top:14.5px;height:399px"></div>
<div class="vl" style="left:153.5px;top:14.5px;height:399px"></div>
<div class="vl" style="left:209.0px;top:14.5px;height:399px"></div>
<div class="vl" style="left:264.5px;top:14.5px;height:399px"></div>
<div class="vl" style="left:373.0px;top:14.5px;height:399px"></div>
<div class="vl" style="left:431.8px;top:14.5px;height:399px"></div>
<div class="vl" style="left:490.0px;top:14.5px;height:399px"></div>
<div class="vl" style="left:548.5px;top:14.5px;height:399px"></div>
<div class="vl" style="left:607.2px;top:14.5px;height:399px"></div>
<div class="vl" style="left:670.0px;top:14.5px;height:399px"></div>
<div class="vl" style="left:739.0px;top:14.5px;height:399px"></div>
<div class="vl" style="left:812.5px;top:14.5px;height:399px"></div>
<div class="hl" style="top:32.90px;width:784px"></div>
<div class="" style="left:0px;top:32.90px;width:27.5px;height:1px;background:#989898"></div>
<span class="rh" style="top:16.10px">2</span>
<div class="hl" style="top:51.30px;width:784px"></div>
<div class="" style="left:0px;top:51.30px;width:27.5px;height:1px;background:#989898"></div>
<span class="rh" style="top:34.50px">3</span>
<div class="hl" style="top:69.70px;width:784px"></div>
<div class="" style="left:0px;top:69.70px;width:27.5px;height:1px;background:#989898"></div>
<span class="rh" style="top:52.90px">4</span>
<div class="hl" style="top:88.10px;width:784px"></div>
<div class="" style="left:0px;top:88.10px;width:27.5px;height:1px;background:#989898"></div>
<span class="rh" style="top:71.30px">5</span>
<div class="hl" style="top:106.50px;width:784px"></div>
<div class="" style="left:0px;top:106.50px;width:27.5px;height:1px;background:#989898"></div>
<span class="rh" style="top:89.70px">6</span>
<div class="hl" style="top:124.90px;width:784px"></div>
<div class="" style="left:0px;top:124.90px;width:27.5px;height:1px;background:#989898"></div>
<span class="rh" style="top:108.10px">7</span>
<div class="hl" style="top:143.30px;width:784px"></div>
<div class="" style="left:0px;top:143.30px;width:27.5px;height:1px;background:#989898"></div>
<span class="rh" style="top:126.50px">8</span>
<div class="hl" style="top:161.70px;width:784px"></div>
<div class="" style="left:0px;top:161.70px;width:27.5px;height:1px;background:#989898"></div>
<span class="rh" style="top:144.90px">9</span>
<div class="hl" style="top:180.10px;width:784px"></div>
<div class="" style="left:0px;top:180.10px;width:27.5px;height:1px;background:#989898"></div>
<span class="rh" style="top:163.30px">10</span>
<div class="hl" style="top:198.50px;width:784px"></div>
<div class="" style="left:0px;top:198.50px;width:27.5px;height:1px;background:#989898"></div>
<span class="rh" style="top:181.70px">11</span>
<div class="hl" style="top:216.90px;width:784px"></div>
<div class="" style="left:0px;top:216.90px;width:27.5px;height:1px;background:#989898"></div>
<span class="rh" style="top:200.10px">12</span>
<div class="hl" style="top:235.30px;width:784px"></div>
<div class="" style="left:0px;top:235.30px;width:27.5px;height:1px;background:#989898"></div>
<span class="rh" style="top:218.50px">13</span>
<div class="hl" style="top:253.70px;width:784px"></div>
<div class="" style="left:0px;top:253.70px;width:27.5px;height:1px;background:#989898"></div>
<span class="rh" style="top:236.90px">14</span>
<div class="hl" style="top:272.10px;width:784px"></div>
<div class="" style="left:0px;top:272.10px;width:27.5px;height:1px;background:#989898"></div>
<span class="rh" style="top:255.30px">15</span>
<div class="hl" style="top:290.50px;width:784px"></div>
<div class="" style="left:0px;top:290.50px;width:27.5px;height:1px;background:#989898"></div>
<span class="rh" style="top:273.70px">16</span>
<div class="hl" style="top:308.90px;width:784px"></div>
<div class="" style="left:0px;top:308.90px;width:27.5px;height:1px;background:#989898"></div>
<span class="rh" style="top:292.10px">17</span>
<div class="hl" style="top:327.30px;width:784px"></div>
<div class="" style="left:0px;top:327.30px;width:27.5px;height:1px;background:#989898"></div>
<span class="rh" style="top:310.50px">18</span>
<div class="hl" style="top:345.70px;width:784px"></div>
<div class="" style="left:0px;top:345.70px;width:27.5px;height:1px;background:#989898"></div>
<span class="rh" style="top:328.90px">19</span>
<div class="hl" style="top:364.10px;width:784px"></div>
<div class="" style="left:0px;top:364.10px;width:27.5px;height:1px;background:#989898"></div>
<span class="rh" style="top:347.30px">20</span>
<div class="hl" style="top:382.50px;width:784px"></div>
<div class="" style="left:0px;top:382.50px;width:27.5px;height:1px;background:#989898"></div>
<span class="rh" style="top:365.70px">21</span>
<div class="hl" style="top:400.90px;width:784px"></div>
<div class="" style="left:0px;top:400.90px;width:27.5px;height:1px;background:#989898"></div>
<span class="rh" style="top:384.10px">22</span>
<div class="hl" style="top:419.30px;width:784px"></div>
<div class="" style="left:0px;top:419.30px;width:27.5px;height:1px;background:#989898"></div>
<span class="cell" style="left:28.4px;top:15.50px">8N0</span>
<span class="cell" style="right:631.7px;top:15.50px">906</span>
<span class="cell" style="right:576.2px;top:15.50px">18</span>
<span class="cell" style="left:210.4px;top:15.50px">BH</span>
<span class="cell" style="left:374.4px;top:15.50px">1.8L</span>
<span class="cell" style="left:433.2px;top:15.50px">R4/5VT</span>
<span class="cell" style="left:740.4px;top:15.50px">G</span>
<span class="cell" style="left:98.4px;top:52.30px">Groupe</span>
<span class="cell" style="left:154.9px;top:52.30px">A:</span>
<span class="cell" style="right:520.7px;top:52.30px">3</span>
<span class="cell" style="left:491.4px;top:52.30px">Groupe</span>
<span class="cell" style="left:549.9px;top:52.30px">B:</span>
<span class="cell" style="right:115.2px;top:52.30px">20</span>
<span class="cell sp" style="left:154.9px;top:70.70px">Engine</span>
<span class="cell" style="left:210.4px;top:70.70px">Speed</span>
<span class="cell sp" style="left:265.9px;top:70.70px">Mass</span>
<span class="cell" style="left:374.4px;top:70.70px">Air</span>
<span class="cell sp" style="left:433.2px;top:70.70px">Flow</span>
<span class="cell sp" style="left:491.4px;top:70.70px">Throttle</span>
<span class="cell" style="left:549.9px;top:70.70px">Valve</span>
<span class="cell" style="left:608.6px;top:70.70px">Angle</span>
<span class="cell" style="left:671.4px;top:70.70px">Ignition</span>
<span class="cell" style="left:98.4px;top:89.10px">Repère</span>
<span class="cell" style="left:154.9px;top:89.10px">(G28)</span>
<span class="cell sp" style="left:210.4px;top:89.10px">Sensor</span>
<span class="cell" style="left:265.9px;top:89.10px">(G70)</span>
<span class="cell" style="left:433.2px;top:89.10px">Timing</span>
<span class="cell" style="left:491.4px;top:89.10px">Angle</span>
<span class="cell" style="left:549.9px;top:89.10px">Repère</span>
<span class="cell sp" style="left:608.6px;top:89.10px">Cylinder</span>
<span class="cell" style="right:46.2px;top:89.10px">1</span>
<span class="cell sp" style="left:740.4px;top:89.10px">Cylinder</span>
<span class="cell" style="left:28.4px;top:107.50px">Marqueur</span>
<span class="cell" style="left:98.4px;top:107.50px">temps</span>
<span class="cell" style="left:210.4px;top:107.50px">/min</span>
<span class="cell" style="left:374.4px;top:107.50px">g/s</span>
<span class="cell" style="left:491.4px;top:107.50px">%</span>
<span class="cell" style="left:608.6px;top:107.50px">°<span class="sp" style="position:static">AvPMH</span></span>
<span class="cell" style="left:671.4px;top:107.50px">temps</span>
<span class="cell" style="left:740.4px;top:107.50px">°KW</span>
<span class="cell" style="left:98.4px;top:125.90px">0.01</span>
<span class="cell" style="right:576.2px;top:125.90px">2080</span>
<span class="cell" style="left:210.4px;top:125.90px">5.33</span>
<span class="cell" style="left:265.9px;top:125.90px">3.5</span>
<span class="cell" style="left:374.4px;top:125.90px">-3.0</span>
<span class="cell" style="left:433.2px;top:125.90px">0.30</span>
<span class="cell" style="left:491.4px;top:125.90px">0.0</span>
<span class="cell" style="left:549.9px;top:125.90px">0.0</span>
<span class="cell" style="left:608.6px;top:125.90px">0.0</span>
<span class="cell" style="left:671.4px;top:125.90px">0.0</span>
<span class="cell" style="left:98.4px;top:144.30px">0.61</span>
<span class="cell" style="right:576.2px;top:144.30px">2080</span>
<span class="cell" style="left:210.4px;top:144.30px">26.14</span>
<span class="cell" style="left:265.9px;top:144.30px">18.0</span>
<span class="cell" style="left:374.4px;top:144.30px">-7.5</span>
<span class="cell" style="left:433.2px;top:144.30px">0.91</span>
<span class="cell" style="left:491.4px;top:144.30px">0.0</span>
<span class="cell" style="left:549.9px;top:144.30px">0.0</span>
<span class="cell" style="left:608.6px;top:144.30px">0.0</span>
<span class="cell" style="left:671.4px;top:144.30px">0.0</span>
<span class="cell" style="left:98.4px;top:162.70px">1.22</span>
<span class="cell" style="right:576.2px;top:162.70px">2200</span>
<span class="cell" style="left:210.4px;top:162.70px">42.17</span>
<span class="cell" style="left:265.9px;top:162.70px">89.4</span>
<span class="cell" style="left:374.4px;top:162.70px">23.3</span>
<span class="cell" style="left:433.2px;top:162.70px">1.52</span>
<span class="cell" style="left:491.4px;top:162.70px">0.0</span>
<span class="cell" style="left:549.9px;top:162.70px">3.0</span>
<span class="cell" style="left:608.6px;top:162.70px">3.0</span>
<span class="cell" style="left:671.4px;top:162.70px">3.0</span>
<span class="cell" style="left:98.4px;top:181.10px">1.81</span>
<span class="cell" style="right:576.2px;top:181.10px">2440</span>
<span class="cell" style="left:210.4px;top:181.10px">57.94</span>
<span class="cell" style="left:265.9px;top:181.10px">93.7</span>
<span class="cell" style="left:374.4px;top:181.10px">18.0</span>
<span class="cell" style="left:433.2px;top:181.10px">2.12</span>
<span class="cell" style="left:491.4px;top:181.10px">0.0</span>
<span class="cell" style="left:549.9px;top:181.10px">3.0</span>
<span class="cell" style="left:608.6px;top:181.10px">3.0</span>
<span class="cell" style="left:671.4px;top:181.10px">3.0</span>
<span class="cell" style="left:98.4px;top:199.50px">2.42</span>
<span class="cell" style="right:576.2px;top:199.50px">2760</span>
<span class="cell" style="left:210.4px;top:199.50px">86.33</span>
<span class="cell" style="left:265.9px;top:199.50px">96.5</span>
<span class="cell" style="left:374.4px;top:199.50px">6.8</span>
<span class="cell" style="left:433.2px;top:199.50px">2.72</span>
<span class="cell" style="left:491.4px;top:199.50px">0.0</span>
<span class="cell" style="left:549.9px;top:199.50px">3.0</span>
<span class="cell" style="left:608.6px;top:199.50px">3.0</span>
<span class="cell" style="left:671.4px;top:199.50px">3.0</span>
<span class="cell" style="left:98.4px;top:217.90px">3.02</span>
<span class="cell" style="right:576.2px;top:217.90px">3160</span>
<span class="cell" style="left:210.4px;top:217.90px">138.00</span>
<span class="cell" style="left:265.9px;top:217.90px">100.0</span>
<span class="cell" style="left:374.4px;top:217.90px">3.0</span>
<span class="cell" style="left:433.2px;top:217.90px">3.33</span>
<span class="cell" style="left:491.4px;top:217.90px">6.0</span>
<span class="cell" style="left:549.9px;top:217.90px">6.0</span>
<span class="cell" style="left:608.6px;top:217.90px">2.3</span>
<span class="cell" style="left:671.4px;top:217.90px">5.3</span>
<span class="cell" style="left:98.4px;top:236.30px">3.63</span>
<span class="cell" style="right:576.2px;top:236.30px">3600</span>
<span class="cell" style="left:210.4px;top:236.30px">89.47</span>
<span class="cell" style="left:265.9px;top:236.30px">100.0</span>
<span class="cell" style="left:374.4px;top:236.30px">10.5</span>
<span class="cell" style="left:433.2px;top:236.30px">3.93</span>
<span class="cell" style="left:491.4px;top:236.30px">6.0</span>
<span class="cell" style="left:549.9px;top:236.30px">6.0</span>
<span class="cell" style="left:608.6px;top:236.30px">2.3</span>
<span class="cell" style="left:671.4px;top:236.30px">5.3</span>
<span class="cell" style="left:98.4px;top:254.70px">4.23</span>
<span class="cell" style="right:576.2px;top:254.70px">3960</span>
<span class="cell" style="left:210.4px;top:254.70px">94.69</span>
<span class="cell" style="left:265.9px;top:254.70px">100.0</span>
<span class="cell" style="left:374.4px;top:254.70px">15.8</span>
<span class="cell" style="left:433.2px;top:254.70px">4.53</span>
<span class="cell" style="left:491.4px;top:254.70px">6.0</span>
<span class="cell" style="left:549.9px;top:254.70px">6.0</span>
<span class="cell" style="left:608.6px;top:254.70px">2.3</span>
<span class="cell" style="left:671.4px;top:254.70px">5.3</span>
<span class="cell" style="left:98.4px;top:273.10px">4.84</span>
<span class="cell" style="right:576.2px;top:273.10px">4280</span>
<span class="cell" style="left:210.4px;top:273.10px">107.06</span>
<span class="cell" style="left:265.9px;top:273.10px">100.0</span>
<span class="cell" style="left:374.4px;top:273.10px">14.3</span>
<span class="cell" style="left:433.2px;top:273.10px">5.14</span>
<span class="cell" style="left:491.4px;top:273.10px">5.3</span>
<span class="cell" style="left:549.9px;top:273.10px">5.3</span>
<span class="cell" style="left:608.6px;top:273.10px">1.5</span>
<span class="cell" style="left:671.4px;top:273.10px">4.5</span>
<span class="cell" style="left:98.4px;top:291.50px">5.44</span>
<span class="cell" style="right:576.2px;top:291.50px">4560</span>
<span class="cell" style="left:210.4px;top:291.50px">116.89</span>
<span class="cell" style="left:265.9px;top:291.50px">100.0</span>
<span class="cell" style="left:374.4px;top:291.50px">15.0</span>
<span class="cell" style="left:433.2px;top:291.50px">5.74</span>
<span class="cell" style="left:491.4px;top:291.50px">3.8</span>
<span class="cell" style="left:549.9px;top:291.50px">3.8</span>
<span class="cell" style="left:608.6px;top:291.50px">0.8</span>
<span class="cell" style="left:671.4px;top:291.50px">3.8</span>
<span class="cell" style="left:98.4px;top:309.90px">6.04</span>
<span class="cell" style="right:576.2px;top:309.90px">4880</span>
<span class="cell" style="left:210.4px;top:309.90px">123.28</span>
<span class="cell" style="left:265.9px;top:309.90px">100.0</span>
<span class="cell" style="left:374.4px;top:309.90px">13.5</span>
<span class="cell" style="left:433.2px;top:309.90px">6.34</span>
<span class="cell" style="left:491.4px;top:309.90px">3.0</span>
<span class="cell" style="left:549.9px;top:309.90px">3.0</span>
<span class="cell" style="left:608.6px;top:309.90px">3.0</span>
<span class="cell" style="left:671.4px;top:309.90px">3.0</span>
<span class="cell" style="left:98.4px;top:328.30px">6.65</span>
<span class="cell" style="right:576.2px;top:328.30px">5200</span>
<span class="cell" style="left:210.4px;top:328.30px">132.67</span>
<span class="cell" style="left:265.9px;top:328.30px">100.0</span>
<span class="cell" style="left:374.4px;top:328.30px">19.5</span>
<span class="cell" style="left:433.2px;top:328.30px">6.95</span>
<span class="cell" style="left:491.4px;top:328.30px">3.0</span>
<span class="cell" style="left:549.9px;top:328.30px">3.0</span>
<span class="cell" style="left:608.6px;top:328.30px">3.0</span>
<span class="cell" style="left:671.4px;top:328.30px">3.0</span>
<span class="cell" style="left:98.4px;top:346.70px">7.25</span>
<span class="cell" style="right:576.2px;top:346.70px">5480</span>
<span class="cell" style="left:210.4px;top:346.70px">143.25</span>
<span class="cell" style="left:265.9px;top:346.70px">100.0</span>
<span class="cell" style="left:374.4px;top:346.70px">17.3</span>
<span class="cell" style="left:433.2px;top:346.70px">7.55</span>
<span class="cell" style="left:491.4px;top:346.70px">3.0</span>
<span class="cell" style="left:549.9px;top:346.70px">3.0</span>
<span class="cell" style="left:608.6px;top:346.70px">3.0</span>
<span class="cell" style="left:671.4px;top:346.70px">6.0</span>
<span class="cell" style="left:98.4px;top:365.10px">7.85</span>
<span class="cell" style="right:576.2px;top:365.10px">5800</span>
<span class="cell" style="left:210.4px;top:365.10px">153.33</span>
<span class="cell" style="left:265.9px;top:365.10px">100.0</span>
<span class="cell" style="left:374.4px;top:365.10px">21.0</span>
<span class="cell" style="left:433.2px;top:365.10px">8.15</span>
<span class="cell" style="left:491.4px;top:365.10px">2.3</span>
<span class="cell" style="left:549.9px;top:365.10px">2.3</span>
<span class="cell" style="left:608.6px;top:365.10px">2.3</span>
<span class="cell" style="left:671.4px;top:365.10px">6.0</span>
<span class="cell" style="left:98.4px;top:383.50px">8.46</span>
<span class="cell" style="right:576.2px;top:383.50px">6000</span>
<span class="cell" style="left:210.4px;top:383.50px">156.53</span>
<span class="cell" style="left:265.9px;top:383.50px">39.2</span>
<span class="cell" style="left:374.4px;top:383.50px">-0.8</span>
<span class="cell" style="left:433.2px;top:383.50px">8.76</span>
<span class="cell" style="left:491.4px;top:383.50px">0.0</span>
<span class="cell" style="left:549.9px;top:383.50px">0.0</span>
<span class="cell" style="left:608.6px;top:383.50px">0.0</span>
<span class="cell" style="left:671.4px;top:383.50px">0.0</span></div><div class="" style="left:784px;top:114px;width:13px;height:399px;background:#f0f0f0"></div><div class="" style="left:784px;top:114.5px;width:13.5px;height:2.2px;background:#0a0a0a"></div><svg style="left:784.8px;top:118.2px" width="12" height="12" viewBox="-6 -6 12 12"><path d="M-3.2 1.6 L0 -1.6 L3.2 1.6" fill="none" stroke="#555" stroke-width="1.4"/></svg><div class="" style="left:784.5px;top:139px;width:12.5px;height:169.7px;background:#cdcdcd"></div><svg style="left:784.8px;top:500px" width="12" height="12" viewBox="-6 -6 12 12"><path d="M-3.2 -1.6 L0 1.6 L3.2 -1.6" fill="none" stroke="#555" stroke-width="1.4"/></svg><div class="" style="left:0px;top:513px;width:797px;height:13.5px;background:#f0f0f0;border-left:1.5px solid #b4b4b4"></div><div class="" style="left:3.5px;top:513.8px;width:12.4px;height:11.6px;background:#d2d2d2"></div><svg style="left:4.699999999999999px;top:514.8px" width="10" height="10" viewBox="-5 -5 10 10"><path d="M2 -3 L-1.5 0 L2 3 Z" fill="#b4b4b4"/><path d="M-2.5 -3 V3" stroke="#b4b4b4" stroke-width="1.2"/></svg><div class="" style="left:16.8px;top:513.8px;width:12.4px;height:11.6px;background:#d2d2d2"></div><svg style="left:18.0px;top:514.8px" width="10" height="10" viewBox="-5 -5 10 10"><path d="M1.8 -3 L-1.8 0 L1.8 3 Z" fill="#b4b4b4"/></svg><div class="" style="left:30.1px;top:513.8px;width:12.4px;height:11.6px;background:#d2d2d2"></div><svg style="left:31.300000000000004px;top:514.8px" width="10" height="10" viewBox="-5 -5 10 10"><path d="M-1.8 -3 L1.8 0 L-1.8 3 Z" fill="#b4b4b4"/></svg><div class="" style="left:43.400000000000006px;top:513.8px;width:12.4px;height:11.6px;background:#d2d2d2"></div><svg style="left:44.60000000000001px;top:514.8px" width="10" height="10" viewBox="-5 -5 10 10"><path d="M-2 -3 L1.5 0 L-2 3 Z" fill="#b4b4b4"/><path d="M2.5 -3 V3" stroke="#b4b4b4" stroke-width="1.2"/></svg><svg style="left:55px;top:512.3px" width="60" height="15" viewBox="0 0 60 15"><path d="M0.5 0.5 L5.5 13 L46 13 L51 0.5" fill="#fff" stroke="#555" stroke-width="1"/><path d="M0 0.5H1 M51 0.5 H160" stroke="#888" fill="none"/></svg><div class="" style="left:106px;top:512.5px;width:109px;height:1px;background:#9a9a9a"></div><span class="t ui b" style="left:63px;top:514.3px;font-size:9.6px;letter-spacing:-0.15px">Feuille1</span><div class="" style="left:212.6px;top:513.5px;width:4.6px;height:12.6px;border-left:1px solid #9a9a9a;border-right:1.4px solid #5a5a5a;border-bottom:1.4px solid #5a5a5a;background:#fff"></div><svg style="left:217.5px;top:513.8px" width="12" height="12" viewBox="-6 -6 12 12"><path d="M1.6 -3.2 L-1.6 0 L1.6 3.2" fill="none" stroke="#555" stroke-width="1.4"/></svg><div class="" style="left:230px;top:514px;width:191px;height:11px;background:#cdcdcd"></div><svg style="left:769.2px;top:513.8px" width="12" height="12" viewBox="-6 -6 12 12"><path d="M-1.6 -3.2 L1.6 0 L-1.6 3.2" fill="none" stroke="#555" stroke-width="1.4"/></svg><div class="" style="left:781.3px;top:512.5px;width:2.8px;height:13.5px;background:#0a0a0a"></div><div class="" style="left:797px;top:88px;width:227px;height:438.5px;background:#f0f0f0"></div><div class="" style="left:803px;top:88px;width:1px;height:438.5px;background:#c4c4c4"></div><div class="" style="left:803px;top:88px;width:221px;height:1px;background:#d0d0d0"></div><svg style="left:799.3px;top:292.3px" width="3" height="30" viewBox="0 0 3 30"><path d="M.4 .5 L2.2 2 L.4 3.5Z M.4 25.5 L2.2 27 L.4 28.5Z" fill="#555"/><rect x=".8" y="7.0" width="1" height="1" fill="#666"/><rect x=".8" y="9.9" width="1" height="1" fill="#666"/><rect x=".8" y="12.8" width="1" height="1" fill="#666"/><rect x=".8" y="15.7" width="1" height="1" fill="#666"/><rect x=".8" y="18.6" width="1" height="1" fill="#666"/><rect x=".8" y="21.5" width="1" height="1" fill="#666"/></svg><span class="t ui b" style="left:815.5px;top:97.2px;font-size:9.9px;color:#111;letter-spacing:-0.25px">Propriétés</span><svg style="left:979px;top:95px" width="10" height="10" viewBox="0 0 10 10"><path d="M2.2 2.2 L7.8 7.8 M7.8 2.2 L2.2 7.8" stroke="#5a5a5a" stroke-width="1.25"/></svg><div class="" style="left:991px;top:89px;width:1px;height:437px;background:#dcdcdc"></div><div class="" style="left:1022px;top:89px;width:1px;height:437px;background:#d6d6d6"></div><svg style="left:1003px;top:98px" width="10" height="10" viewBox="0 0 10 10"><path d="M1.5 1.6 H7.5 M1.5 3.8 H7.5 M1.5 6 H5" stroke="#444" stroke-width="1"/><path d="M5.4 5.6 H9.2 L7.3 8.2Z" fill="#333"/></svg><div class="" style="left:995.5px;top:121px;width:25px;height:25.5px;border:1px solid #b9b9b9;border-radius:3px;background:#f6f6f6"></div><svg style="left:999px;top:124px" width="18" height="19" viewBox="0 0 18 19"><ellipse cx="9.5" cy="17" rx="6.5" ry="1.5" fill="#cdcdcd"/><path d="M1 4.6 L5.4 2 L9 4 L9 12.6 L5 14.6 L1 12.4Z" fill="#2f96e8"/><path d="M5.4 2 L9.6 .6 L13 2.4 L9 4Z" fill="#5fb4f4"/><path d="M9 4 L13 2.4 L17 4.4 V12.4 L11.4 15.6 L5 13.6 L5 9.4 L9 8Z" fill="#6fd030"/><path d="M11.4 10 L17 8 V12.4 L11.4 15.6Z" fill="#4fae1c"/><path d="M5 9.6 L11.4 10.6 V15.6 L5 13.6Z" fill="#7fdc3c"/><path d="M1 8.4 L5 10 M5 2.4 V14.4 M1 4.6 L5 6.4 L9 4.4" stroke="#bfe2fb" stroke-width=".7" fill="none"/><path d="M13 2.6 V10 M9 4.2 V9 M9 8 L13 6 L17 8 M8.2 10.2 V14.6" stroke="#c4f0a0" stroke-width=".7" fill="none"/></svg><svg style="left:999px;top:152px" width="18" height="19" viewBox="0 0 18 19"><ellipse cx="9" cy="17.4" rx="6.5" ry="1.4" fill="#cfcfcf"/><path d="M4 8 L12 6 L13.6 14 L6 16Z" fill="#2c6fc0" stroke="#1c3f78" stroke-width=".7"/><path d="M6 9 L11 7.6 L8 15Z" fill="#18284a"/><circle cx="5.2" cy="4.6" r="2" fill="#e8622c"/><circle cx="3" cy="9.6" r="1.6" fill="#d84890"/><path d="M12.6 1.4 l.8 1.7 1.9.2 -1.4 1.3 .4 1.9 -1.7 -.9 -1.7.9 .4 -1.9 -1.4 -1.3 1.9 -.2z" fill="#f0c030"/><circle cx="14.6" cy="10.6" r="1.9" fill="#68c040"/><circle cx="9" cy="3" r="1.3" fill="#a860d0"/></svg><svg style="left:999px;top:180px" width="18" height="19" viewBox="0 0 18 19"><ellipse cx="9" cy="17.4" rx="6.5" ry="1.4" fill="#cfcfcf"/><g transform="rotate(-14 9 9)"><rect x="2" y="3.4" width="14" height="11" fill="#f8f8f8" stroke="#a8b0b8" stroke-width=".8"/><rect x="3.4" y="4.8" width="11.2" height="8.2" fill="#7cc0ee"/><path d="M3.4 13 L7 8.4 L9.6 11 L11.6 9.4 L14.6 13Z" fill="#4f9a3c"/><circle cx="12" cy="7" r="1.2" fill="#f6e27a"/></g></svg><svg style="left:999px;top:207px" width="18" height="19" viewBox="0 0 18 19"><ellipse cx="9" cy="17.6" rx="6" ry="1.2" fill="#d4d4d4"/><circle cx="9" cy="9" r="7.2" fill="#fbf6ea" stroke="#e89a1c" stroke-width="2"/><path d="M12.6 4.6 L10 10 L8 8Z" fill="#d8392c"/><path d="M5.4 13.4 L8 8 L10 10Z" fill="#3f6fb4"/><path d="M9 2.6 V4 M9 14 V15.4 M2.6 9 H4 M14 9 H15.4" stroke="#8a6a2c" stroke-width=".8"/></svg><svg style="left:999px;top:233px" width="18" height="20" viewBox="0 0 18 20"><ellipse cx="9" cy="18.6" rx="6.5" ry="1.2" fill="#d4d4d4"/><path d="M4.5 1.5 H12.5 L16 5 V17 H4.5Z" fill="#eaf3fc" stroke="#6f9bd0" stroke-width=".9"/><text x="1.4" y="14.6" font-family="Liberation Serif,serif" font-style="italic" font-weight="bold" font-size="14" fill="#23406c">f</text><text x="7.8" y="14.8" font-family="Liberation Sans,sans-serif" font-weight="bold" font-size="8.6" fill="#23406c">x</text></svg><div class="" style="left:977px;top:111px;width:13.5px;height:415px;background:#f0f0f0"></div><svg style="left:978px;top:112.5px" width="12" height="12" viewBox="-6 -6 12 12"><path d="M-3.2 1.6 L0 -1.6 L3.2 1.6" fill="none" stroke="#555" stroke-width="1.4"/></svg><div class="" style="left:977px;top:125.5px;width:13.5px;height:350px;background:#cdcdcd"></div><svg style="left:978px;top:511px" width="12" height="12" viewBox="-6 -6 12 12"><path d="M-3.2 -1.6 L0 1.6 L3.2 -1.6" fill="none" stroke="#555" stroke-width="1.4"/></svg><div class="" style="left:807px;top:112px;width:170px;height:18.5px;background:linear-gradient(#ededed,#e5e5e5)"></div><svg style="left:811.5px;top:118.6px" width="8" height="8" viewBox="0 0 8 8"><rect x=".5" y=".5" width="6.4" height="6.4" fill="#fdfdfd" stroke="#707070" stroke-width=".9"/><path d="M2 3.7 H5.4" stroke="#333" stroke-width="1"/></svg><span class="t ui b" style="left:823px;top:118.2px;font-size:9.9px;color:#111;letter-spacing:-0.3px">Texte</span><svg style="left:964.5px;top:115.6px" width="10" height="9" viewBox="0 0 10 9"><rect x=".6" y=".6" width="8.6" height="7.4" rx=".8" fill="#eaf2fb" stroke="#6f9bd0" stroke-width="1"/><rect x="1" y="1" width="7.8" height="1.6" fill="#6f9bd0"/><path d="M3 5.6 H7" stroke="#5c7fae" stroke-width=".9" stroke-dasharray="1 .7"/></svg><div class="combo" style="left:812px;top:134.8px;width:113px;height:18.2px;"></div><span class="t ui" style="left:815.5px;top:139.2px;font-size:9.6px">Arial</span><div class="cbtn" style="left:910.5px;top:135.8px;width:13.5px;height:16.2px;"></div><svg style="left:911.3px;top:138px" width="12" height="12" viewBox="-6 -6 12 12"><path d="M-2.8 -1.4 L0 1.4 L2.8 -1.4" fill="none" stroke="#555" stroke-width="1.1"/></svg><div class="combo" style="left:929.3px;top:134.8px;width:41.7px;height:18.2px;"></div><span class="t ui" style="left:933px;top:139.2px;font-size:9.6px">10</span><div class="cbtn" style="left:956.5px;top:135.8px;width:13.5px;height:16.2px;"></div><svg style="left:957.3px;top:138px" width="12" height="12" viewBox="-6 -6 12 12"><path d="M-2.8 -1.4 L0 1.4 L2.8 -1.4" fill="none" stroke="#555" stroke-width="1.1"/></svg><div class="grp" style="left:812.5px;top:160.5px;width:111px;height:23.7px;"></div><div class="grp" style="left:930.5px;top:160.5px;width:41.5px;height:23.7px;"></div><span class="t ui b" style="left:819.2px;top:167.6px;font-size:11.5px;color:#23262b;transform:scaleX(.86);transform-origin:0 0;-webkit-text-stroke:.4px #23262b">G</span><span class="t ui b" style="left:840px;top:167.2px;font-size:12px;font-style:italic;font-family:'Liberation Serif',serif;color:#2a2d33">I</span><span class="t ui u" style="left:858.5px;top:166.3px;font-size:11px;color:#2a2d33;text-underline-offset:1.5px">S</span><svg style="left:873px;top:168.5px" width="8" height="8" viewBox="-4 -4 8 8"><path d="M-2.4 -1.2 L2.4 -1.2 L0 1.7999999999999998 Z" fill="#222"/></svg><span class="t ui b" style="left:885.5px;top:169.6px;font-size:5.6px;color:#59626c;text-decoration:line-through">ABC</span><svg style="left:904px;top:165px" width="17" height="15" viewBox="0 0 17 15"><text x="6.5" y="12.6" font-family="Liberation Sans,sans-serif" font-size="13" font-weight="bold" fill="#b9c2cc">A</text><text x="1" y="11.6" font-family="Liberation Sans,sans-serif" font-size="13" font-weight="bold" fill="#6fa0d8" stroke="#35567e" stroke-width=".5">A</text></svg><svg style="left:934.5px;top:165px" width="15" height="15" viewBox="0 0 15 15"><rect x="1" y="2" width="3" height="11.6" fill="#fdfdfd" stroke="#4a5560" stroke-width="1"/><text x="5.2" y="13.4" font-family="Liberation Sans,sans-serif" font-size="10.5" font-weight="bold" fill="#5d8fcc" stroke="#2f3a48" stroke-width=".5">A</text><path d="M8.4 2.6 L10.6 .2 L12.8 2.6Z" fill="#d8452c"/></svg><svg style="left:954.5px;top:165px" width="15" height="15" viewBox="0 0 15 15"><rect x="1" y="2" width="3" height="11.6" fill="#fdfdfd" stroke="#4a5560" stroke-width="1"/><text x="5.2" y="13.4" font-family="Liberation Sans,sans-serif" font-size="10.5" font-weight="bold" fill="#5d8fcc" stroke="#2f3a48" stroke-width=".5">A</text><path d="M8.4 .4 H12.8 L10.6 2.8Z" fill="#d8452c"/></svg><div class="grp" style="left:812.5px;top:193.3px;width:42px;height:23.9px;"></div><div class="grp" style="left:862.5px;top:193.3px;width:30.5px;height:23.9px;"></div><div class="grp" style="left:907.5px;top:193.3px;width:31.2px;height:23.9px;"></div><svg style="left:817px;top:198px" width="15" height="15" viewBox="0 0 15 15"><text x="0" y="12.6" font-family="Liberation Sans,sans-serif" font-size="11" fill="none" stroke="#c2c2c2" stroke-width=".8">A</text><text x="7" y="9" font-family="Liberation Sans,sans-serif" font-size="8" fill="none" stroke="#c6c6c6" stroke-width=".7">C</text></svg><svg style="left:836px;top:198px" width="15" height="15" viewBox="0 0 15 15"><text x="0" y="12.6" font-family="Liberation Sans,sans-serif" font-size="11" fill="none" stroke="#c2c2c2" stroke-width=".8">A</text><text x="7" y="9" font-family="Liberation Sans,sans-serif" font-size="8" fill="none" stroke="#c6c6c6" stroke-width=".7">A</text></svg><svg style="left:866px;top:198px" width="16" height="15" viewBox="0 0 16 15"><text x="0" y="8" font-family="Liberation Sans,sans-serif" font-size="8.5" fill="none" stroke="#c4c4c4" stroke-width=".7">AV</text><path d="M1.6 11.4 H12 M3.6 9.6 L1.4 11.4 L3.6 13.2 M10 9.6 L12.2 11.4 L10 13.2" fill="none" stroke="#c8c8c8" stroke-width="1"/></svg><svg style="left:882.5px;top:201.5px" width="8" height="8" viewBox="-4 -4 8 8"><path d="M-2 -1.0 L2 -1.0 L0 1.5 Z" fill="#bdbdbd"/></svg><svg style="left:912.50px;top:198.30px" width="14" height="14" viewBox="0 0 16 16" ><text x="8" y="10.6" font-family="Liberation Sans,sans-serif" font-size="12" font-weight="bold" text-anchor="middle" fill="#5585c4" stroke="#26364e" stroke-width=".7">A</text><rect x="1.6" y="11.6" width="12.8" height="3" fill="#b9bcc0" stroke="#2d3137" stroke-width=".9"/></svg><svg style="left:928px;top:201.8px" width="8" height="8" viewBox="-4 -4 8 8"><path d="M-2.4 -1.2 L2.4 -1.2 L0 1.7999999999999998 Z" fill="#222"/></svg><div class="" style="left:807px;top:222px;width:170px;height:18.5px;background:linear-gradient(#ededed,#e5e5e5)"></div><svg style="left:811.5px;top:228.6px" width="8" height="8" viewBox="0 0 8 8"><rect x=".5" y=".5" width="6.4" height="6.4" fill="#fdfdfd" stroke="#707070" stroke-width=".9"/><path d="M2 3.7 H5.4" stroke="#333" stroke-width="1"/></svg><span class="t ui b" style="left:823px;top:228.2px;font-size:9.9px;color:#111;letter-spacing:-0.3px">Alignement</span><svg style="left:964.5px;top:225.6px" width="10" height="9" viewBox="0 0 10 9"><rect x=".6" y=".6" width="8.6" height="7.4" rx=".8" fill="#eaf2fb" stroke="#6f9bd0" stroke-width="1"/><rect x="1" y="1" width="7.8" height="1.6" fill="#6f9bd0"/><path d="M3 5.6 H7" stroke="#5c7fae" stroke-width=".9" stroke-dasharray="1 .7"/></svg><div class="grp" style="left:811px;top:242.7px;width:82px;height:23.5px;"></div><div class="grp" style="left:907.5px;top:242.7px;width:62.2px;height:23.5px;"></div><svg style="left:814.50px;top:247.40px" width="14" height="14" viewBox="0 0 16 16" ><path d="M2.5 2.6 H13.5" stroke="#5578ac" stroke-width="1.7"/><path d="M2.5 5.3 H10.5" stroke="#5578ac" stroke-width="1.7"/><path d="M2.5 8.0 H13.5" stroke="#5578ac" stroke-width="1.7"/><path d="M2.5 10.7 H10.5" stroke="#5578ac" stroke-width="1.7"/><path d="M2.5 13.4 H13.5" stroke="#5578ac" stroke-width="1.7"/></svg><svg style="left:834.50px;top:247.40px" width="14" height="14" viewBox="0 0 16 16" ><path d="M2.5 2.6 H13.5" stroke="#5578ac" stroke-width="1.7"/><path d="M4.5 5.3 H11.5" stroke="#5578ac" stroke-width="1.7"/><path d="M2.5 8.0 H13.5" stroke="#5578ac" stroke-width="1.7"/><path d="M4.5 10.7 H11.5" stroke="#5578ac" stroke-width="1.7"/><path d="M2.5 13.4 H13.5" stroke="#5578ac" stroke-width="1.7"/></svg><svg style="left:854.50px;top:247.40px" width="14" height="14" viewBox="0 0 16 16" ><path d="M2.5 2.6 H13.5" stroke="#5578ac" stroke-width="1.7"/><path d="M5.5 5.3 H13.5" stroke="#5578ac" stroke-width="1.7"/><path d="M2.5 8.0 H13.5" stroke="#5578ac" stroke-width="1.7"/><path d="M5.5 10.7 H13.5" stroke="#5578ac" stroke-width="1.7"/><path d="M2.5 13.4 H13.5" stroke="#5578ac" stroke-width="1.7"/></svg><svg style="left:874.50px;top:247.40px" width="14" height="14" viewBox="0 0 16 16" ><path d="M2.5 2.6 H13.5" stroke="#5578ac" stroke-width="1.7"/><path d="M2.5 5.3 H13.5" stroke="#5578ac" stroke-width="1.7"/><path d="M2.5 8.0 H13.5" stroke="#5578ac" stroke-width="1.7"/><path d="M2.5 10.7 H13.5" stroke="#5578ac" stroke-width="1.7"/><path d="M2.5 13.4 H13.5" stroke="#5578ac" stroke-width="1.7"/></svg><svg style="left:911px;top:246px" width="56" height="18" viewBox="0 0 56 18"><path d="M2 3.2 H12" stroke="#4f74a8" stroke-width="1.7"/><path d="M2 5.8 H10" stroke="#7fa2d2" stroke-width="1.7"/><path d="M22 7.6 H32" stroke="#4f74a8" stroke-width="1.7"/><path d="M22 10.2 H30" stroke="#7fa2d2" stroke-width="1.7"/><path d="M42 11.8 H52" stroke="#7fa2d2" stroke-width="1.7"/><path d="M42 14.4 H52" stroke="#4f74a8" stroke-width="1.7"/></svg><span class="t ui dis" style="left:812px;top:276.6px;font-size:9.6px"><span class="u" style="position:static">I</span>ndentation à gauch</span><div class="" style="left:899.3px;top:278.7px;width:10.2px;height:9.8px;background:#fff;border:1px solid #333"></div><span class="t ui" style="left:913px;top:279px;font-size:9.6px;width:64px;overflow:hidden"><span class="u" style="position:static">R</span>etour à la ligr</span><div class="" style="left:812px;top:290.2px;width:73.3px;height:17.6px;background:#fff;border:1.5px solid #a9c5e2"></div><span class="t ui dis" style="left:815.5px;top:294.8px;font-size:9.6px">0 pt</span><div class="" style="left:871.5px;top:291.5px;width:12.8px;height:15.2px;background:#f1f1f1;border-left:1px solid #dadada"></div><svg style="left:875px;top:294px" width="6" height="10" viewBox="0 0 6 10"><path d="M.6 3.4 L3 .8 L5.4 3.4Z M.6 6.4 L3 9 L5.4 6.4Z" fill="#666"/></svg><div class="" style="left:899.3px;top:299.4px;width:10.2px;height:9.8px;background:#fbfbfb;border:1px solid #d2d2d2"></div><span class="t ui dis" style="left:913px;top:300.2px;font-size:9.6px;width:62.5px;overflow:hidden"><span class="u" style="position:static">F</span>usionner les c</span><span class="t ui" style="left:812px;top:317px;font-size:9.6px"><span class="u" style="position:static">O</span>rientation du texte :</span><svg style="left:811px;top:332px" width="42" height="42" viewBox="0 0 42 42"><circle cx="21" cy="20.8" r="19.6" fill="#f4f4f4" stroke="#6682a8" stroke-width="1"/><path d="M21 20.8 H40" stroke="#4d6a92" stroke-width="1"/><circle cx="21" cy="20.8" r="1.1" fill="#3d5a82"/></svg><div class="combo" style="left:866px;top:338px;width:106.6px;height:18.8px;"></div><span class="t ui" style="left:869.5px;top:342.8px;font-size:9.6px">0 degrés</span><div class="cbtn" style="left:958px;top:339px;width:13.6px;height:16.8px;"></div><svg style="left:958.8px;top:341.5px" width="12" height="12" viewBox="-6 -6 12 12"><path d="M-2.8 -1.4 L0 1.4 L2.8 -1.4" fill="none" stroke="#555" stroke-width="1.1"/></svg><div class="" style="left:867px;top:367.6px;width:9.8px;height:9.8px;background:#fff;border:1px solid #333"></div><span class="t ui" style="left:880px;top:368.2px;font-size:9.6px">Empilage <span class="u" style="position:static">v</span>ertical</span><div class="" style="left:807px;top:384px;width:170px;height:18.5px;background:linear-gradient(#ededed,#e5e5e5)"></div><svg style="left:811.5px;top:390.6px" width="8" height="8" viewBox="0 0 8 8"><rect x=".5" y=".5" width="6.4" height="6.4" fill="#fdfdfd" stroke="#707070" stroke-width=".9"/><path d="M2 3.7 H5.4" stroke="#333" stroke-width="1"/></svg><span class="t ui b" style="left:823px;top:390.2px;font-size:9.9px;color:#111;letter-spacing:-0.3px">Apparence de la cellule</span><svg style="left:964.5px;top:387.6px" width="10" height="9" viewBox="0 0 10 9"><rect x=".6" y=".6" width="8.6" height="7.4" rx=".8" fill="#eaf2fb" stroke="#6f9bd0" stroke-width="1"/><rect x="1" y="1" width="7.8" height="1.6" fill="#6f9bd0"/><path d="M3 5.6 H7" stroke="#5c7fae" stroke-width=".9" stroke-dasharray="1 .7"/></svg><span class="t ui" style="left:812px;top:408px;font-size:9.6px">Arrière-plan de <span class="u" style="position:static">c</span>ellule :</span><div class="grp" style="left:811px;top:421.8px;width:79px;height:18.8px;"></div><svg style="left:815px;top:424px" width="14" height="14" viewBox="0 0 14 14"><path d="M5 2.6 L9.6 1.4 L12.2 7.6 L7 9.6Z" fill="#e4e9ee" stroke="#4c5660" stroke-width=".9"/><path d="M4.6 3.6 C2.6 4.4 1.6 6 2.2 9.4 C3.2 7.6 4.2 7 5.6 6.6Z" fill="#4f8fd8" stroke="#2d66b0" stroke-width=".6"/></svg><div class="" style="left:830px;top:425.8px;width:46px;height:9px;background:#f6f6f6;border:1px solid #333;box-shadow:inset 0 0 0 1px #bbb"></div><svg style="left:880px;top:427.5px" width="8" height="8" viewBox="-4 -4 8 8"><path d="M-2.4 -1.2 L2.4 -1.2 L0 1.7999999999999998 Z" fill="#222"/></svg><span class="t ui" style="left:812px;top:452px;font-size:9.6px"><span class="u" style="position:static">B</span>ordure de cellule :</span><div class="grp" style="left:811px;top:465px;width:52px;height:44.7px;"></div><svg style="left:816px;top:470.5px" width="35" height="34" viewBox="0 0 35 34"><path d="M.5 .5 H33.5 V33 H.5Z M17 .5 V33 M.5 16.7 H33.5" fill="none" stroke="#8d8d8d" stroke-width=".9" stroke-dasharray="1 1.6"/></svg><svg style="left:853.3px;top:483.5px" width="8" height="8" viewBox="-4 -4 8 8"><path d="M-2.4 -1.2 L2.4 -1.2 L0 1.7999999999999998 Z" fill="#222"/></svg><div class="grp" style="left:872px;top:465px;width:79px;height:20px;"></div><div class="" style="left:878px;top:474.6px;width:59px;height:1px;background:#c0c0c0"></div><svg style="left:939.5px;top:471px" width="8" height="8" viewBox="-4 -4 8 8"><path d="M-2 -1.0 L2 -1.0 L0 1.5 Z" fill="#b9b9b9"/></svg><div class="grp" style="left:872px;top:492.5px;width:79px;height:19.2px;"></div><svg style="left:875px;top:496px" width="14" height="12" viewBox="0 0 14 12"><path d="M2 8.6 L3 6 L8.6 1 L10.6 3 L5 8Z" fill="#e6e6e6" stroke="#c4c4c4" stroke-width=".8"/><path d="M1 10.6 H12" stroke="#c4c4c4" stroke-width="1.2"/></svg><div class="" style="left:891px;top:497.5px;width:45px;height:9.6px;background:#f1f1f1;border:1px solid #cfcfcf"></div><svg style="left:939.5px;top:498.5px" width="8" height="8" viewBox="-4 -4 8 8"><path d="M-2 -1.0 L2 -1.0 L0 1.5 Z" fill="#b9b9b9"/></svg><div class="" style="left:812px;top:521.6px;width:10px;height:4.6px;background:#fff;border:1px solid #333;border-bottom:none"></div><div class="" style="left:826px;top:523.9px;width:142px;height:1.7px;overflow:hidden"><span class="t ui" style="left:0px;top:-0.9px;font-size:9.6px;color:#222"><span class="u" style="position:static">A</span>fficher le quadrillage des cellules</span></div><div class="" style="left:0px;top:526px;width:1024px;height:18px;background:#f0f0f0;border-top:1px solid #d4d4d4"></div><span class="t ui" style="left:8.5px;top:532.2px;font-size:9.6px;color:#222;letter-spacing:-0.2px">Feuille 1 / 1</span><div class="" style="left:258.5px;top:530px;width:1px;height:13px;background:#b4b4b4"></div><span class="t ui" style="left:263.5px;top:532.2px;font-size:9.6px;color:#222">Par défaut</span><div class="" style="left:551.5px;top:530px;width:1px;height:13px;background:#b4b4b4"></div><div class="" style="left:578.5px;top:530px;width:1px;height:13px;background:#b4b4b4"></div><div class="" style="left:591.5px;top:530px;width:1px;height:13px;background:#b4b4b4"></div><div class="" style="left:614.5px;top:530px;width:1px;height:13px;background:#b4b4b4"></div><div class="" style="left:863.5px;top:530px;width:1px;height:13px;background:#b4b4b4"></div><div class="" style="left:987.5px;top:530px;width:1px;height:13px;background:#b4b4b4"></div><span class="t ui" style="left:556px;top:532.2px;font-size:9.6px;color:#222">STD</span><span class="t ui" style="left:717px;top:532.2px;font-size:9.6px;color:#222">Somme=0</span><svg style="left:866px;top:529px" width="120" height="14" viewBox="0 0 120 14"><path d="M16 7.4 H100" stroke="#8d8d8d" stroke-width="1"/><path d="M58 3 V12" stroke="#777" stroke-width="1"/><circle cx="7.6" cy="7.4" r="4" fill="#dbe9f8" stroke="#5c8ac4" stroke-width="1.2"/><path d="M5.4 7.4 H9.8" stroke="#3f6fb4" stroke-width="1.2"/><circle cx="109.6" cy="7.4" r="4" fill="#dbe9f8" stroke="#5c8ac4" stroke-width="1.2"/><path d="M107.4 7.4 H111.8 M109.6 5.2 V9.6" stroke="#3f6fb4" stroke-width="1.2"/><circle cx="63.4" cy="7.6" r="2.9" fill="#5f8fc8" stroke="#3a5f92" stroke-width=".9"/></svg><span class="t ui" style="left:991.5px;top:531.8px;font-size:10px;color:#222;letter-spacing:-0.55px">135 %</span><div class="" style="left:0px;top:544px;width:1024px;height:32px;background:#000;border-top:1px solid #6a6a6a"></div><svg style="left:13px;top:553px" width="14" height="14" viewBox="0 0 14 14"><path d="M0 2 L5.8 1.2 V6.6 H0Z M6.6 1.1 L13.6 0 V6.6 H6.6Z M0 7.4 H5.8 V12.8 L0 12Z M6.6 7.4 H13.6 V14 L6.6 12.9Z" fill="#fff"/></svg><div class="" style="left:38.5px;top:544px;width:275px;height:32px;background:#f2f2f2;border-top:1px solid #f0f0f0"></div><svg style="left:45px;top:552px" width="18" height="18" viewBox="0 0 18 18"><circle cx="9" cy="9" r="7.1" fill="none" stroke="#111" stroke-width="2.3"/></svg><span class="t ui" style="left:70px;top:554.6px;font-size:11.15px;color:#2b2b2b">Taper ici pour rechercher</span><svg style="left:291px;top:553px" width="12" height="16" viewBox="0 0 12 16"><rect x="3.8" y="1" width="4.4" height="8.4" rx="2.2" fill="none" stroke="#555" stroke-width="1"/><path d="M1.6 7.4 C1.6 12.4 10.4 12.4 10.4 7.4 M6 11.2 V14 M3.6 14.2 H8.4" fill="none" stroke="#555" stroke-width="1"/></svg><svg style="left:324px;top:553px" width="18" height="14" viewBox="0 0 18 14"><rect x="4" y="1" width="10" height="11.6" fill="none" stroke="#e6e6e6" stroke-width="1.2"/><path d="M2.4 2.6 H.8 V11 H2.4 M15.6 2.6 H17.2 V11 H15.6" fill="none" stroke="#e6e6e6" stroke-width="1"/></svg><svg style="left:365px;top:550px" width="17" height="20" viewBox="0 0 17 20"><path d="M1.6 1 L5.8 5.4 H11.2 L15.4 1 L16 9.6 C16 13 12.4 17 10.4 19 H6.6 C4.6 17 1 13 1 9.6Z" fill="#f4f4f4"/><path d="M2.6 8.4 L7.6 11 L6.4 14.6 L4.2 13.6Z M14.4 8.4 L9.4 11 L10.6 14.6 L12.8 13.6Z" fill="#000"/><path d="M7.8 15.8 L8.5 16.8 L9.2 15.8Z" fill="#111"/></svg><svg style="left:404px;top:550px" width="19" height="19" viewBox="0 0 19 19"><circle cx="9.5" cy="10" r="8.6" fill="#ffb52a"/><path d="M9.5 1.4 C14.4 1.4 18.1 5.4 18.1 10 C18.1 14.8 14.2 18.6 9.5 18.6 C5 18.6 .9 15 .9 10 C.9 7.4 2 5.4 3.2 4.2 C3.2 5.6 3.8 6.4 4.4 6.8 C5.6 3.6 8 3.6 9.5 1.4Z" fill="#ff6a2a"/><path d="M11 2 C15.6 3 18.2 6.6 18.1 10.6 C18 15 14.4 18.6 9.5 18.6 C13 16.6 15 13 14.4 9 C14 6 12.6 3.6 11 2Z" fill="#ffc838"/><path d="M15 2.8 C17.4 5.2 18.4 8 18 11.4 C16.8 8 15.6 6.6 13.6 5.6Z" fill="#ffd23a"/><circle cx="10.2" cy="10.4" r="4.6" fill="#3a53c8"/><path d="M5.4 8.4 C7.4 7.2 9.4 8.4 10.2 9.6 C9 9.6 8 10.2 8.2 11.4 C8.6 13 11 13.4 12.6 12 C12.4 14.6 9.8 16 7.6 15 C5.4 14 4.4 11 5.4 8.4Z" fill="#ff7a22"/></svg><div class="" style="left:398.5px;top:574px;width:31px;height:2px;background:#76b9ed"></div><svg style="left:444px;top:551px" width="20" height="18" viewBox="0 0 20 18"><path d="M1 1.6 H7.4 L9 3.4 H19 V16.6 H1Z" fill="#f6c94c"/><path d="M1 5 H19 V16.6 H1Z" fill="#fbdc7c"/><path d="M4.6 9.6 H15.4 V16.6 H4.6Z" fill="#3f9be6"/><path d="M7.4 12.6 H12.6 V16.6 H7.4Z" fill="#fbdc7c"/></svg><div class="" style="left:438px;top:574px;width:32px;height:2px;background:#76b9ed"></div><svg style="left:483px;top:549px" width="22" height="21" viewBox="0 0 22 21"><path d="M10 5.4 C15.6 5 18.6 8.4 18 12.4 C17.6 15.6 15 15.4 13.4 15 C11.8 14.6 11 15.4 11.4 16.8 C11.8 18.6 9.6 19.6 6.4 18.4 C2.4 16.8 .8 13 2 9.8 C3.2 6.8 6.4 5.6 10 5.4Z" fill="#e9eef4" stroke="#8ea2b8" stroke-width=".8"/><circle cx="6" cy="10" r="1.6" fill="#e8452c"/><circle cx="10.4" cy="8.2" r="1.5" fill="#f0c030"/><circle cx="5.4" cy="14.4" r="1.5" fill="#3f8fe0"/><circle cx="14.4" cy="10" r="1.4" fill="#58b040"/><path d="M9.4 17 L18.6 2.6 L20 3.6 L11.6 18Z" fill="#c88a4a" stroke="#7a4c1c" stroke-width=".5"/><path d="M18.6 2.6 L20.6 .4 L20 3.6Z" fill="#e8c89a"/></svg><div class="" style="left:478px;top:574px;width:32.5px;height:2px;background:#76b9ed"></div><div class="" style="left:515px;top:544px;width:38.5px;height:32px;background:#333;border-top:1px solid #8a8a8a"></div><svg style="left:524px;top:548px" width="22" height="22" viewBox="0 0 22 22"><path d="M7 4 H15.6 L19.6 8 V20.6 H7Z" fill="#eef3f6" stroke="#2c4a5e" stroke-width="1.4"/><path d="M15.6 4 L19.6 8 H15.6Z" fill="#7ab648"/><path d="M1 6.4 C5 3 8 7 13 4.6 M1 9.4 C5 6.4 8 9.8 12 8" stroke="#cfe0ee" stroke-width="1.3" fill="none"/><rect x="9.2" y="10.6" width="9" height="8.4" fill="#b8d85c" stroke="#5a7a1c" stroke-width=".8"/><path d="M9.2 14.8 H18.2 M13.7 10.6 V19" stroke="#f2f8dc" stroke-width="1.3"/></svg><div class="" style="left:515px;top:574px;width:38.5px;height:2px;background:#76b9ed"></div><svg style="left:866px;top:551px" width="70" height="18" viewBox="0 0 70 18"><path d="M2.4 11 L6.6 6.6 L10.8 11" fill="none" stroke="#f0f0f0" stroke-width="1.1"/><rect x="22.6" y="4.4" width="10.6" height="7.6" fill="none" stroke="#f0f0f0" stroke-width="1"/><path d="M20.6 2.6 H25 V7.6 H20.6Z" fill="#000" stroke="#f0f0f0" stroke-width=".9"/><path d="M25 14.4 H31 M28 12 V14.4" stroke="#f0f0f0" stroke-width="1"/><path d="M40.6 7.4 H42.8 L46 4.4 V13.6 L42.8 10.6 H40.6Z" fill="none" stroke="#f0f0f0" stroke-width=".9"/><path d="M47.8 7 C48.8 8.2 48.8 9.8 47.8 11 M49.8 5.6 C51.6 7.6 51.6 10.4 49.8 12.4 M51.8 4.2 C54.4 7 54.4 11 51.8 13.8" fill="none" stroke="#f0f0f0" stroke-width=".8"/></svg><span class="t ui" style="left:940px;top:548px;font-size:9.8px;color:#fff;letter-spacing:-0.35px">17:39</span><span class="t ui" style="left:926.6px;top:563.2px;font-size:9.8px;color:#fff">11/01/2018</span><svg style="left:990px;top:553px" width="16" height="15" viewBox="0 0 16 15"><path d="M1.2 1 H12.6 V9.6 H6 L3.4 12.4 V9.6 H1.2Z" fill="#f4f4f4"/><path d="M3 3.4 H10.8 M3 5.4 H10.8 M3 7.4 H8" stroke="#333" stroke-width=".7"/><circle cx="11.6" cy="10.4" r="2.6" fill="#000" stroke="#f0f0f0" stroke-width=".8"/><path d="M10.4 10.4 L11.4 11.4 L12.9 9.5" fill="none" stroke="#f0f0f0" stroke-width=".7"/></svg></body></html>
